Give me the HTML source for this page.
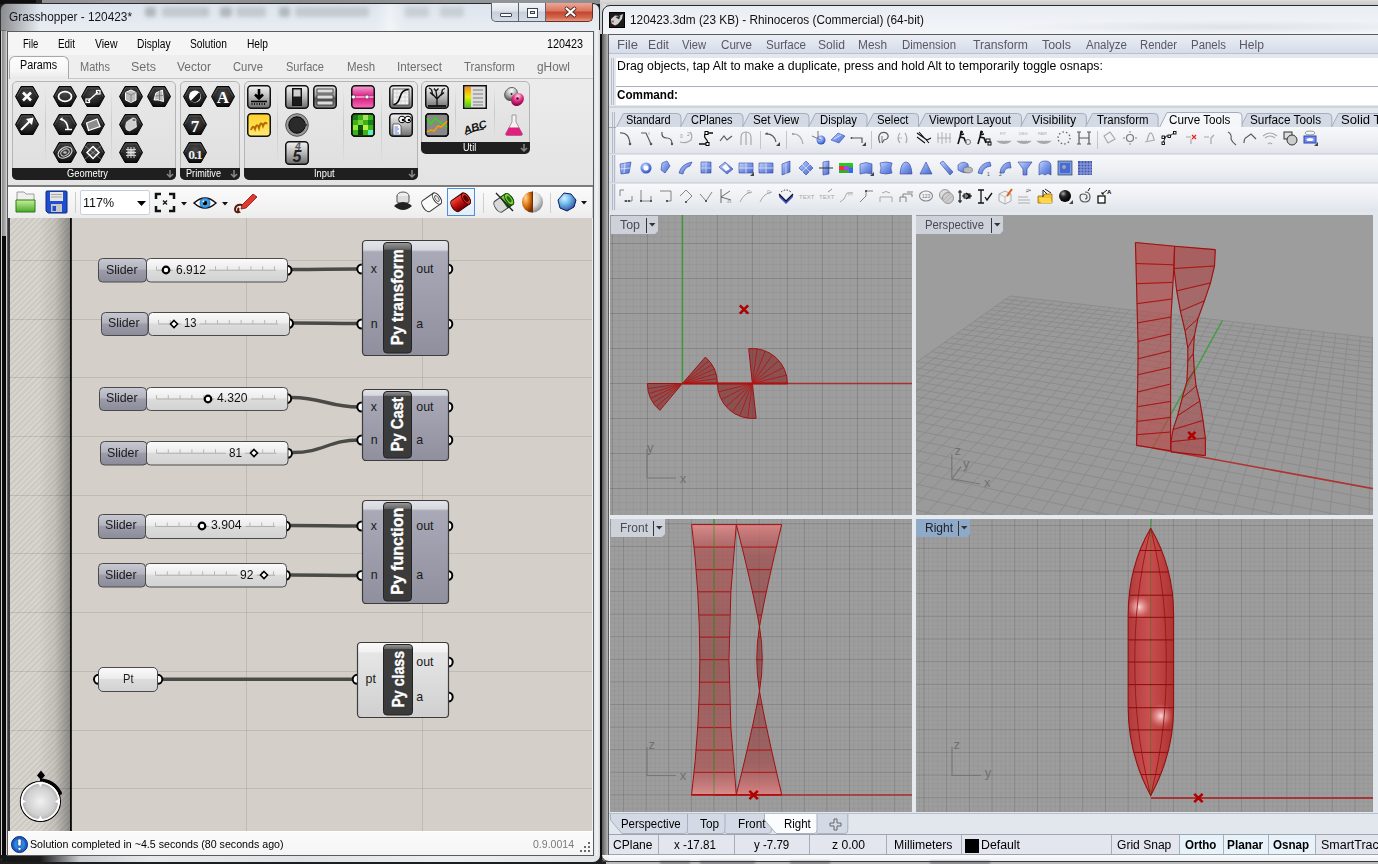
<!DOCTYPE html>
<html><head><meta charset="utf-8">
<style>
*{margin:0;padding:0;box-sizing:border-box}
html,body{width:1378px;height:864px;overflow:hidden;background:#1e1e1e;font-family:"Liberation Sans",sans-serif;font-size:12px;color:#000}
.a{position:absolute}
.t{white-space:nowrap;line-height:1}
svg.a{overflow:visible}
</style></head><body>
<div class="a" style="left:0px;top:0px;width:1378px;height:864px;background:#1e1e1e"></div>
<div class="a" style="left:0px;top:0px;width:600px;height:4px;background:linear-gradient(90deg,#0e0e0e 0 36px,#2a2a2a 36px 42px,#8e9194 42px,#9a9da0 120px,#8a8d90 300px,#95989b 450px,#8c8f92)"></div>
<div class="a" style="left:600px;top:0px;width:778px;height:6px;background:linear-gradient(#dcdcdc,#c4c4c4)"></div>
<div class="a" style="left:0px;top:3px;width:600px;height:859px;border-radius:7px 7px 7px 7px;background:linear-gradient(#dde4ec,#e9eef3 28px,#e4e8ec 40px,#dcdfe3);border:1px solid #2a2a2a"></div>
<div class="a" style="left:0px;top:30px;width:7px;height:832px;background:linear-gradient(90deg,#111 0 1px,#d0d0d0 1px 2px,#0a0a0a 2px 6px,#cfcfcf 6px);border-bottom-left-radius:7px"></div>
<div class="a" style="left:2px;top:30px;width:4px;height:206px;background:linear-gradient(90deg,#8a8a8a,#b8b8b8)"></div>
<div class="a" style="left:0px;top:4px;width:40px;height:27px;border-top-left-radius:7px;background:linear-gradient(90deg,rgba(60,60,60,.55),rgba(200,205,210,0))"></div>
<div class="a" style="left:0px;top:855px;width:600px;height:7px;border-radius:0 0 7px 7px;background:linear-gradient(90deg,#161616 0,#1a1a1a 40px,#c9cdd2 80px,#e6e9ec 150px,#dfe2e6 300px,#eceff2 450px,#e2e5e8);"></div>
<div class="a" style="left:594px;top:30px;width:6px;height:826px;background:linear-gradient(90deg,#dfe3e7,#f2f4f6 3px,#cfd3d8)"></div>
<div class="a" style="left:145px;top:7px;width:11px;height:10px;background:rgba(90,95,100,0.35);filter:blur(2px);border-radius:3px"></div>
<div class="a" style="left:162px;top:7px;width:42px;height:10px;background:rgba(90,95,100,0.22);filter:blur(2px);border-radius:3px"></div>
<div class="a" style="left:203px;top:7px;width:6px;height:10px;background:rgba(90,95,100,0.25);filter:blur(2px);border-radius:3px"></div>
<div class="a" style="left:220px;top:7px;width:12px;height:10px;background:rgba(90,95,100,0.35);filter:blur(2px);border-radius:3px"></div>
<div class="a" style="left:236px;top:7px;width:30px;height:10px;background:rgba(90,95,100,0.22);filter:blur(2px);border-radius:3px"></div>
<div class="a" style="left:279px;top:7px;width:11px;height:10px;background:rgba(90,95,100,0.35);filter:blur(2px);border-radius:3px"></div>
<div class="a" style="left:295px;top:7px;width:74px;height:10px;background:rgba(90,95,100,0.22);filter:blur(2px);border-radius:3px"></div>
<div class="a" style="left:405px;top:7px;width:24px;height:10px;background:rgba(90,95,100,0.18);filter:blur(2px);border-radius:3px"></div>
<div class="a" style="left:440px;top:7px;width:24px;height:10px;background:rgba(90,95,100,0.18);filter:blur(2px);border-radius:3px"></div>
<div class="a" style="left:375px;top:4px;width:30px;height:27px;background:linear-gradient(90deg,rgba(255,255,255,0),rgba(255,255,255,.45) 50%,rgba(255,255,255,0))"></div>
<div class="a t" style="left:8.5px;top:10.84px;font-size:12px;color:#14141e;transform:scaleX(0.9861);transform-origin:0 0;">Grasshopper - 120423*</div>
<div class="a" style="left:491px;top:3px;width:28px;height:19px;border:1px solid #5d6470;border-top:none;border-radius:0 0 0 5px;background:linear-gradient(#f2f4f7,#dfe3ea 45%,#c9cfd9 50%,#d6dce4)"></div>
<div class="a" style="left:519px;top:3px;width:27px;height:19px;border:1px solid #5d6470;border-top:none;border-left:none;background:linear-gradient(#f2f4f7,#dfe3ea 45%,#c9cfd9 50%,#d6dce4)"></div>
<div class="a" style="left:546px;top:3px;width:47px;height:19px;border:1px solid #6e2b22;border-top:none;border-left:none;border-radius:0 0 5px 0;background:linear-gradient(#f0a593,#d9745e 45%,#c3442c 50%,#d3664c 80%,#e49a83)"></div>
<div class="a" style="left:500px;top:13px;width:12px;height:4px;background:#fff;border:1px solid #3b4454;border-radius:1px"></div>
<div class="a" style="left:527px;top:8px;width:11px;height:10px;background:#fff;border:1px solid #3b4454"></div>
<div class="a" style="left:530px;top:11px;width:5px;height:3px;background:#dde;border:1px solid #3b4454"></div>
<svg class="a" style="left:564px;top:6px;" width="13" height="12" viewBox="0 0 13 12"><path d="M2.5 2.5 L10.5 9.5 M10.5 2.5 L2.5 9.5" stroke="#4a2a26" stroke-width="3.8" stroke-linecap="round"/><path d="M2.5 2.5 L10.5 9.5 M10.5 2.5 L2.5 9.5" stroke="#fff" stroke-width="2.2" stroke-linecap="round"/></svg>
<div class="a" style="left:7px;top:31px;width:587px;height:825px;background:#f0f0f0;border:1px solid #5b5b5b"></div>
<div class="a" style="left:8px;top:32px;width:585px;height:23px;background:#f5f5f5"></div>
<div class="a t" style="left:23.4px;top:37.84px;font-size:12px;color:#000;transform:scaleX(0.7913);transform-origin:0 0;">File</div>
<div class="a t" style="left:58px;top:37.84px;font-size:12px;color:#000;transform:scaleX(0.8221);transform-origin:0 0;">Edit</div>
<div class="a t" style="left:95px;top:37.84px;font-size:12px;color:#000;transform:scaleX(0.8723);transform-origin:0 0;">View</div>
<div class="a t" style="left:137px;top:37.84px;font-size:12px;color:#000;transform:scaleX(0.8514);transform-origin:0 0;">Display</div>
<div class="a t" style="left:190px;top:37.84px;font-size:12px;color:#000;transform:scaleX(0.8533);transform-origin:0 0;">Solution</div>
<div class="a t" style="left:247px;top:37.84px;font-size:12px;color:#000;transform:scaleX(0.8509);transform-origin:0 0;">Help</div>
<div class="a t" style="left:547px;top:37.84px;font-size:12px;color:#000;transform:scaleX(0.8991);transform-origin:0 0;">120423</div>
<div class="a" style="left:8px;top:55px;width:585px;height:25px;background:#eeeeee"></div>
<div class="a" style="left:9px;top:56px;width:60px;height:24px;background:linear-gradient(#fdfdfd,#f6f6f6 60%,#e6e6e6);border:1px solid #a8a8a8;border-bottom:none;border-radius:6px 6px 0 0"></div>
<div class="a t" style="left:19.5px;top:59.34px;font-size:12px;color:#000;transform:scaleX(0.8950);transform-origin:0 0;">Params</div>
<div class="a t" style="left:79.5px;top:61.14px;font-size:12px;color:#6e6e6e;transform:scaleX(0.9181);transform-origin:0 0;">Maths</div>
<div class="a t" style="left:131px;top:61.14px;font-size:12px;color:#6e6e6e;transform:scaleX(1.0412);transform-origin:0 0;">Sets</div>
<div class="a t" style="left:177px;top:61.14px;font-size:12px;color:#6e6e6e;transform:scaleX(0.9995);transform-origin:0 0;">Vector</div>
<div class="a t" style="left:233px;top:61.14px;font-size:12px;color:#6e6e6e;transform:scaleX(0.9373);transform-origin:0 0;">Curve</div>
<div class="a t" style="left:286px;top:61.14px;font-size:12px;color:#6e6e6e;transform:scaleX(0.9189);transform-origin:0 0;">Surface</div>
<div class="a t" style="left:347px;top:61.14px;font-size:12px;color:#6e6e6e;transform:scaleX(0.9543);transform-origin:0 0;">Mesh</div>
<div class="a t" style="left:397px;top:61.14px;font-size:12px;color:#6e6e6e;transform:scaleX(0.9779);transform-origin:0 0;">Intersect</div>
<div class="a t" style="left:464px;top:61.14px;font-size:12px;color:#6e6e6e;transform:scaleX(0.9405);transform-origin:0 0;">Transform</div>
<div class="a t" style="left:537px;top:61.14px;font-size:12px;color:#6e6e6e;transform:scaleX(0.9897);transform-origin:0 0;">gHowl</div>
<div class="a" style="left:8px;top:79px;width:585px;height:106px;background:linear-gradient(#ececec,#e3e3e3)"></div>
<div class="a" style="left:69px;top:78px;width:524px;height:1px;background:#c9c9c9"></div>
<div class="a" style="left:12px;top:81px;width:164px;height:99px;border:1px solid #b5b5b5;border-radius:5px;background:linear-gradient(#e9e9e9,#dedede)"></div>
<div class="a" style="left:12px;top:168px;width:164px;height:12px;background:#1f1f1f;border-radius:0 0 5px 5px"></div>
<div class="a t" style="left:67px;top:168.11px;font-size:10.5px;color:#fff;transform:scaleX(0.8895);transform-origin:0 0;">Geometry</div>
<svg class="a" style="left:166px;top:170px;" width="8" height="8" viewBox="0 0 8 8"><path d="M4 0V7M1 4L4 7L7 4" stroke="#888" stroke-width="1.5" fill="none"/></svg>
<div class="a" style="left:180px;top:81px;width:60px;height:99px;border:1px solid #b5b5b5;border-radius:5px;background:linear-gradient(#e9e9e9,#dedede)"></div>
<div class="a" style="left:180px;top:168px;width:60px;height:12px;background:#1f1f1f;border-radius:0 0 5px 5px"></div>
<div class="a t" style="left:186px;top:168.11px;font-size:10.5px;color:#fff;transform:scaleX(0.8695);transform-origin:0 0;">Primitive</div>
<svg class="a" style="left:230px;top:170px;" width="8" height="8" viewBox="0 0 8 8"><path d="M4 0V7M1 4L4 7L7 4" stroke="#888" stroke-width="1.5" fill="none"/></svg>
<div class="a" style="left:244px;top:81px;width:174px;height:99px;border:1px solid #b5b5b5;border-radius:5px;background:linear-gradient(#e9e9e9,#dedede)"></div>
<div class="a" style="left:244px;top:168px;width:174px;height:12px;background:#1f1f1f;border-radius:0 0 5px 5px"></div>
<div class="a t" style="left:314.4px;top:168.11px;font-size:10.5px;color:#fff;transform:scaleX(0.8822);transform-origin:0 0;">Input</div>
<svg class="a" style="left:408px;top:170px;" width="8" height="8" viewBox="0 0 8 8"><path d="M4 0V7M1 4L4 7L7 4" stroke="#888" stroke-width="1.5" fill="none"/></svg>
<div class="a" style="left:421px;top:81px;width:109px;height:73px;border:1px solid #b5b5b5;border-radius:5px;background:linear-gradient(#e9e9e9,#dedede)"></div>
<div class="a" style="left:421px;top:142px;width:109px;height:12px;background:#1f1f1f;border-radius:0 0 5px 5px"></div>
<div class="a t" style="left:463px;top:142.11px;font-size:10.5px;color:#fff;transform:scaleX(0.8704);transform-origin:0 0;">Util</div>
<svg class="a" style="left:520px;top:144px;" width="8" height="8" viewBox="0 0 8 8"><path d="M4 0V7M1 4L4 7L7 4" stroke="#888" stroke-width="1.5" fill="none"/></svg>
<div class="a" style="left:45px;top:86px;width:1px;height:78px;background:linear-gradient(rgba(0,0,0,0),rgba(0,0,0,.12),rgba(0,0,0,0))"></div>
<div class="a" style="left:111px;top:86px;width:1px;height:78px;background:linear-gradient(rgba(0,0,0,0),rgba(0,0,0,.12),rgba(0,0,0,0))"></div>
<div class="a" style="left:277px;top:86px;width:1px;height:78px;background:linear-gradient(rgba(0,0,0,0),rgba(0,0,0,.12),rgba(0,0,0,0))"></div>
<div class="a" style="left:343px;top:86px;width:1px;height:78px;background:linear-gradient(rgba(0,0,0,0),rgba(0,0,0,.12),rgba(0,0,0,0))"></div>
<div class="a" style="left:381px;top:86px;width:1px;height:78px;background:linear-gradient(rgba(0,0,0,0),rgba(0,0,0,.12),rgba(0,0,0,0))"></div>
<div class="a" style="left:455px;top:86px;width:1px;height:52px;background:linear-gradient(rgba(0,0,0,0),rgba(0,0,0,.12),rgba(0,0,0,0))"></div>
<div class="a" style="left:494px;top:86px;width:1px;height:52px;background:linear-gradient(rgba(0,0,0,0),rgba(0,0,0,.12),rgba(0,0,0,0))"></div>
<div class="a" style="left:8px;top:185px;width:585px;height:2px;background:#7d7d7d"></div>
<div class="a" style="left:8px;top:187px;width:584px;height:31px;background:linear-gradient(#fbfbfb,#f3f3f3 60%,#ececec)"></div>
<div class="a" style="left:592px;top:187px;width:1px;height:31px;background:#cfcfcf"></div>
<div class="a" style="left:8px;top:218px;width:2px;height:613px;background:#3a3a3a"></div>
<div class="a" style="left:10px;top:218px;width:60px;height:613px;background:linear-gradient(90deg,rgba(0,0,0,0) 48%,rgba(0,0,0,.09) 75%,rgba(0,0,0,.34)),repeating-linear-gradient(-45deg,#d8d5ce 0 2px,#cdcac3 2px 4px)"></div>
<div class="a" style="left:70px;top:218px;width:2px;height:613px;background:linear-gradient(90deg,#080808 60%,#5a5955)"></div>
<div class="a" style="left:72px;top:218px;width:520px;height:613px;background:#d4d0c9"></div>
<div class="a" style="left:10px;top:260px;width:582px;height:1px;background:rgba(0,0,0,.10)"></div>
<div class="a" style="left:10px;top:319px;width:582px;height:1px;background:rgba(0,0,0,.10)"></div>
<div class="a" style="left:10px;top:377px;width:582px;height:1px;background:rgba(0,0,0,.10)"></div>
<div class="a" style="left:10px;top:436px;width:582px;height:1px;background:rgba(0,0,0,.10)"></div>
<div class="a" style="left:10px;top:495px;width:582px;height:1px;background:rgba(0,0,0,.10)"></div>
<div class="a" style="left:10px;top:553px;width:582px;height:1px;background:rgba(0,0,0,.10)"></div>
<div class="a" style="left:10px;top:612px;width:582px;height:1px;background:rgba(0,0,0,.10)"></div>
<div class="a" style="left:10px;top:671px;width:582px;height:1px;background:rgba(0,0,0,.10)"></div>
<div class="a" style="left:10px;top:730px;width:582px;height:1px;background:rgba(0,0,0,.10)"></div>
<div class="a" style="left:10px;top:788px;width:582px;height:1px;background:rgba(0,0,0,.10)"></div>
<div class="a" style="left:246px;top:218px;width:1px;height:613px;background:rgba(0,0,0,.10)"></div>
<div class="a" style="left:422px;top:218px;width:1px;height:613px;background:rgba(0,0,0,.10)"></div>
<div class="a" style="left:8px;top:831px;width:585px;height:24px;background:linear-gradient(#fbfbfb,#f4f4f4);border-top:1px solid #fff"></div>
<div class="a t" style="left:30px;top:839.19px;font-size:11px;color:#000;transform:scaleX(0.9675);transform-origin:0 0;">Solution completed in ~4.5 seconds (80 seconds ago)</div>
<div class="a t" style="left:533px;top:839.19px;font-size:11px;color:#7a7a7a;transform:scaleX(0.9576);transform-origin:0 0;">0.9.0014</div>
<div class="a" style="left:588px;top:842px;width:2px;height:2px;background:#6a6a6a"></div>
<div class="a" style="left:584px;top:846px;width:2px;height:2px;background:#6a6a6a"></div>
<div class="a" style="left:588px;top:846px;width:2px;height:2px;background:#6a6a6a"></div>
<div class="a" style="left:580px;top:850px;width:2px;height:2px;background:#6a6a6a"></div>
<div class="a" style="left:584px;top:850px;width:2px;height:2px;background:#6a6a6a"></div>
<div class="a" style="left:588px;top:850px;width:2px;height:2px;background:#6a6a6a"></div>
<svg width="0" height="0" style="position:absolute"><defs>
<radialGradient id="hexg" cx="50%" cy="35%" r="65%"><stop offset="0" stop-color="#4a4a4a"/><stop offset=".7" stop-color="#202020"/><stop offset="1" stop-color="#0a0a0a"/></radialGradient>
<linearGradient id="sqg" x1="0" y1="0" x2="0" y2="1"><stop offset="0" stop-color="#f4f4f4"/><stop offset=".5" stop-color="#b9b9b9"/><stop offset="1" stop-color="#6a6a6a"/></linearGradient>
<linearGradient id="sqd" x1="0" y1="0" x2="0" y2="1"><stop offset="0" stop-color="#e6e6e6"/><stop offset=".45" stop-color="#9a9a9a"/><stop offset=".55" stop-color="#5a5a5a"/><stop offset="1" stop-color="#8a8a8a"/></linearGradient>
<linearGradient id="pink" x1="0" y1="0" x2="0" y2="1"><stop offset="0" stop-color="#f3a6d3"/><stop offset=".5" stop-color="#d6187f"/><stop offset="1" stop-color="#f76fb9"/></linearGradient>
<linearGradient id="yel" x1="0" y1="0" x2="0" y2="1"><stop offset="0" stop-color="#ffd028"/><stop offset="1" stop-color="#ffe873"/></linearGradient>
<linearGradient id="leg" x1="0" y1="0" x2="0" y2="1"><stop offset="0" stop-color="#ff8a00"/><stop offset=".5" stop-color="#e8f000"/><stop offset="1" stop-color="#39d200"/></linearGradient>
<radialGradient id="ball" cx="35%" cy="30%" r="70%"><stop offset="0" stop-color="#fff"/><stop offset=".5" stop-color="#bbb"/><stop offset="1" stop-color="#555"/></radialGradient>
<radialGradient id="pball" cx="35%" cy="30%" r="70%"><stop offset="0" stop-color="#fde"/><stop offset=".5" stop-color="#e0388a"/><stop offset="1" stop-color="#8a0040"/></radialGradient>
<linearGradient id="folder" x1="0" y1="0" x2="0" y2="1"><stop offset="0" stop-color="#c9f09a"/><stop offset="1" stop-color="#4aa82a"/></linearGradient>
<radialGradient id="blueb" cx="35%" cy="30%" r="75%"><stop offset="0" stop-color="#d8f0ff"/><stop offset=".4" stop-color="#76c0f0"/><stop offset="1" stop-color="#2a4a9a"/></radialGradient>
<radialGradient id="redc" cx="40%" cy="35%" r="70%"><stop offset="0" stop-color="#f05050"/><stop offset=".6" stop-color="#c01010"/><stop offset="1" stop-color="#600"/></radialGradient>
</defs></svg>
<svg class="a" style="left:15px;top:86px;" width="24" height="21" viewBox="0 0 24 21"><path d="M0.5 10.5 L6 0.5 L18 0.5 L23.5 10.5 L18 20.5 L6 20.5 Z" fill="url(#hexg)" stroke="#050505"/><path d="M2 10.5 L6.8 2 L17.2 2 L22 10.5" fill="none" stroke="rgba(255,255,255,.18)"/><path d="M8 6.5 L16 14.5 M16 6.5 L8 14.5" stroke="#fff" stroke-width="2.6"/></svg>
<svg class="a" style="left:53px;top:86px;" width="24" height="21" viewBox="0 0 24 21"><path d="M0.5 10.5 L6 0.5 L18 0.5 L23.5 10.5 L18 20.5 L6 20.5 Z" fill="url(#hexg)" stroke="#050505"/><path d="M2 10.5 L6.8 2 L17.2 2 L22 10.5" fill="none" stroke="rgba(255,255,255,.18)"/><ellipse cx="12" cy="10.5" rx="6.5" ry="4.8" fill="none" stroke="#fff" stroke-width="1.8"/></svg>
<svg class="a" style="left:81px;top:86px;" width="24" height="21" viewBox="0 0 24 21"><path d="M0.5 10.5 L6 0.5 L18 0.5 L23.5 10.5 L18 20.5 L6 20.5 Z" fill="url(#hexg)" stroke="#050505"/><path d="M2 10.5 L6.8 2 L17.2 2 L22 10.5" fill="none" stroke="rgba(255,255,255,.18)"/><path d="M7 15 L17 6" stroke="#fff" stroke-width="1.3"/><rect x="5" y="13" width="3.5" height="3.5" fill="none" stroke="#fff" stroke-width="1.2"/><rect x="15.5" y="4.5" width="3.5" height="3.5" fill="none" stroke="#fff" stroke-width="1.2"/></svg>
<svg class="a" style="left:119px;top:86px;" width="24" height="21" viewBox="0 0 24 21"><path d="M0.5 10.5 L6 0.5 L18 0.5 L23.5 10.5 L18 20.5 L6 20.5 Z" fill="url(#hexg)" stroke="#050505"/><path d="M2 10.5 L6.8 2 L17.2 2 L22 10.5" fill="none" stroke="rgba(255,255,255,.18)"/><path d="M6.5 6.5 L12 4 L17 6.5 L17 14 L12 16.5 L6.5 14 Z" fill="#bdbdbd" stroke="#fff" stroke-width="1"/><path d="M12 9 L17 6.5 M12 9 L12 16.5 M12 9 L6.5 6.5" stroke="#777" stroke-width=".8"/></svg>
<svg class="a" style="left:147px;top:86px;" width="24" height="21" viewBox="0 0 24 21"><path d="M0.5 10.5 L6 0.5 L18 0.5 L23.5 10.5 L18 20.5 L6 20.5 Z" fill="url(#hexg)" stroke="#050505"/><path d="M2 10.5 L6.8 2 L17.2 2 L22 10.5" fill="none" stroke="rgba(255,255,255,.18)"/><path d="M7 14 L9 7 L15.5 4 L16.5 15.5 L11 14 Z" fill="#bbb" stroke="#fff"/><path d="M12.5 5 L12.5 14.5 M8.5 10 L16 9.5" stroke="#666" stroke-width=".7"/></svg>
<svg class="a" style="left:15px;top:114px;" width="24" height="21" viewBox="0 0 24 21"><path d="M0.5 10.5 L6 0.5 L18 0.5 L23.5 10.5 L18 20.5 L6 20.5 Z" fill="url(#hexg)" stroke="#050505"/><path d="M2 10.5 L6.8 2 L17.2 2 L22 10.5" fill="none" stroke="rgba(255,255,255,.18)"/><path d="M6 16 L15 7" stroke="#fff" stroke-width="2.2"/><path d="M11 5 L18.5 3.5 L17 11 Z" fill="#fff"/></svg>
<svg class="a" style="left:53px;top:114px;" width="24" height="21" viewBox="0 0 24 21"><path d="M0.5 10.5 L6 0.5 L18 0.5 L23.5 10.5 L18 20.5 L6 20.5 Z" fill="url(#hexg)" stroke="#050505"/><path d="M2 10.5 L6.8 2 L17.2 2 L22 10.5" fill="none" stroke="rgba(255,255,255,.18)"/><path d="M7.5 5 Q14.5 6.5 15 15 M12 15.5 L19 15.5" fill="none" stroke="#fff" stroke-width="1.6"/><path d="M6.5 5.5 L9.5 3 L9.8 7Z" fill="#fff"/></svg>
<svg class="a" style="left:81px;top:114px;" width="24" height="21" viewBox="0 0 24 21"><path d="M0.5 10.5 L6 0.5 L18 0.5 L23.5 10.5 L18 20.5 L6 20.5 Z" fill="url(#hexg)" stroke="#050505"/><path d="M2 10.5 L6.8 2 L17.2 2 L22 10.5" fill="none" stroke="rgba(255,255,255,.18)"/><path d="M5.5 9 L16 5 L19 12.5 L7.5 16.5 Z" fill="#8d8d8d" stroke="#fff" stroke-width="1.3"/></svg>
<svg class="a" style="left:119px;top:114px;" width="24" height="21" viewBox="0 0 24 21"><path d="M0.5 10.5 L6 0.5 L18 0.5 L23.5 10.5 L18 20.5 L6 20.5 Z" fill="url(#hexg)" stroke="#050505"/><path d="M2 10.5 L6.8 2 L17.2 2 L22 10.5" fill="none" stroke="rgba(255,255,255,.18)"/><path d="M7.5 8 L14 3.8 Q17.5 4.5 17 8 L17.5 13 L10.5 17 Q6.5 16.5 6.5 12.5 Z" fill="#cfcfcf" stroke="#fff" stroke-width=".6"/><ellipse cx="15" cy="6" rx="2.2" ry="1.8" fill="#777" stroke="#fff" stroke-width=".6"/></svg>
<svg class="a" style="left:53px;top:142px;" width="24" height="21" viewBox="0 0 24 21"><path d="M0.5 10.5 L6 0.5 L18 0.5 L23.5 10.5 L18 20.5 L6 20.5 Z" fill="url(#hexg)" stroke="#050505"/><path d="M2 10.5 L6.8 2 L17.2 2 L22 10.5" fill="none" stroke="rgba(255,255,255,.18)"/><ellipse cx="12" cy="10.5" rx="7.5" ry="5" transform="rotate(-30 12 10.5)" fill="none" stroke="#ddd" stroke-width="1.1"/><ellipse cx="12" cy="10.5" rx="4.5" ry="3" transform="rotate(-30 12 10.5)" fill="none" stroke="#ccc" stroke-width="1"/><ellipse cx="12" cy="10.5" rx="1.8" ry="1.2" fill="#bbb"/></svg>
<svg class="a" style="left:81px;top:142px;" width="24" height="21" viewBox="0 0 24 21"><path d="M0.5 10.5 L6 0.5 L18 0.5 L23.5 10.5 L18 20.5 L6 20.5 Z" fill="url(#hexg)" stroke="#050505"/><path d="M2 10.5 L6.8 2 L17.2 2 L22 10.5" fill="none" stroke="rgba(255,255,255,.18)"/><path d="M12 4.5 L18 10.5 L12 16.5 L6 10.5 Z" fill="#444" stroke="#fff" stroke-width="1.5"/><path d="M4 4 L20 17 M20 4 L4 17" stroke="rgba(255,255,255,.35)" stroke-width="1"/></svg>
<svg class="a" style="left:119px;top:142px;" width="24" height="21" viewBox="0 0 24 21"><path d="M0.5 10.5 L6 0.5 L18 0.5 L23.5 10.5 L18 20.5 L6 20.5 Z" fill="url(#hexg)" stroke="#050505"/><path d="M2 10.5 L6.8 2 L17.2 2 L22 10.5" fill="none" stroke="rgba(255,255,255,.18)"/><g stroke="#cfcfcf" stroke-width="1"><path d="M7 7.5H17M7 10.5H17M7 13.5H17M9 5V16M12 5V16M15 5V16"/></g><circle cx="12" cy="10.5" r="3" fill="rgba(255,255,255,.5)"/></svg>
<svg class="a" style="left:183px;top:86px;" width="24" height="21" viewBox="0 0 24 21"><path d="M0.5 10.5 L6 0.5 L18 0.5 L23.5 10.5 L18 20.5 L6 20.5 Z" fill="url(#hexg)" stroke="#050505"/><path d="M2 10.5 L6.8 2 L17.2 2 L22 10.5" fill="none" stroke="rgba(255,255,255,.18)"/><circle cx="12" cy="10.5" r="6" fill="#fff"/><path d="M16.2 6.3 L7.8 14.7 A6 6 0 0 0 16.2 6.3Z" fill="#1a1a1a"/></svg>
<svg class="a" style="left:211px;top:86px;" width="24" height="21" viewBox="0 0 24 21"><path d="M0.5 10.5 L6 0.5 L18 0.5 L23.5 10.5 L18 20.5 L6 20.5 Z" fill="url(#hexg)" stroke="#050505"/><path d="M2 10.5 L6.8 2 L17.2 2 L22 10.5" fill="none" stroke="rgba(255,255,255,.18)"/><text x="12" y="17" text-anchor="middle" font-family="Liberation Serif" font-weight="bold" font-size="17" fill="#fff">A</text></svg>
<svg class="a" style="left:183px;top:114px;" width="24" height="21" viewBox="0 0 24 21"><path d="M0.5 10.5 L6 0.5 L18 0.5 L23.5 10.5 L18 20.5 L6 20.5 Z" fill="url(#hexg)" stroke="#050505"/><path d="M2 10.5 L6.8 2 L17.2 2 L22 10.5" fill="none" stroke="rgba(255,255,255,.18)"/><text x="12" y="17.5" text-anchor="middle" font-family="Liberation Serif" font-weight="bold" font-size="17" fill="#fff">7</text></svg>
<svg class="a" style="left:183px;top:142px;" width="24" height="21" viewBox="0 0 24 21"><path d="M0.5 10.5 L6 0.5 L18 0.5 L23.5 10.5 L18 20.5 L6 20.5 Z" fill="url(#hexg)" stroke="#050505"/><path d="M2 10.5 L6.8 2 L17.2 2 L22 10.5" fill="none" stroke="rgba(255,255,255,.18)"/><text x="12" y="16.5" text-anchor="middle" font-family="Liberation Serif" font-weight="bold" font-size="13.5" letter-spacing="-1.2" fill="#eee">0.1</text></svg>
<svg class="a" style="left:247px;top:85px;" width="24" height="24" viewBox="0 0 24 24"><rect x="0.75" y="0.75" width="22.5" height="22.5" rx="3.5" fill="url(#sqg)" stroke="#111" stroke-width="1.5"/><path d="M12 4 V13 M8 9.5 L12 13.5 L16 9.5" stroke="#000" stroke-width="2.6" fill="none"/><path d="M4 16.5 H20" stroke="#000" stroke-width="1.6"/><path d="M5 18 V20 M7.5 18V20 M10 18V20 M12.5 18V20 M15 18V20 M17.5 18V20" stroke="#000" stroke-width=".9"/></svg>
<svg class="a" style="left:247px;top:113px;" width="24" height="24" viewBox="0 0 24 24"><rect x="0.75" y="0.75" width="22.5" height="22.5" rx="3.5" fill="url(#yel)" stroke="#111" stroke-width="1.5"/><path d="M4 17 Q6 11 8 16 Q10 9 12 15 Q14 7 16 13 Q18 8 20 11" stroke="#b56a00" stroke-width="2" fill="none"/></svg>
<svg class="a" style="left:285px;top:85px;" width="24" height="24" viewBox="0 0 24 24"><rect x="0.75" y="0.75" width="22.5" height="22.5" rx="3.5" fill="url(#sqg)" stroke="#111" stroke-width="1.5"/><rect x="7.5" y="3.5" width="9" height="17" fill="#1b1b1b" stroke="#111"/><rect x="8.5" y="4.5" width="7" height="7" fill="#cfcfcf"/></svg>
<svg class="a" style="left:313px;top:85px;" width="24" height="24" viewBox="0 0 24 24"><rect x="0.75" y="0.75" width="22.5" height="22.5" rx="3.5" fill="url(#sqd)" stroke="#111" stroke-width="1.5"/><rect x="4" y="4" width="16" height="4" fill="#ddd" stroke="#333" stroke-width=".8"/><rect x="4" y="10" width="16" height="4" fill="#ddd" stroke="#333" stroke-width=".8"/><rect x="4" y="16" width="16" height="4" fill="#ddd" stroke="#333" stroke-width=".8"/></svg>
<svg class="a" style="left:285px;top:113px;" width="24" height="24" viewBox="0 0 24 24"><circle cx="12" cy="12" r="11.3" fill="#9a9a9a" stroke="#555" stroke-width="1"/><circle cx="12" cy="12" r="8.2" fill="#2a2a2a" stroke="#000" stroke-width="1"/><path d="M17 8 L22.5 12 L17 16Z" fill="#2a2a2a"/></svg>
<svg class="a" style="left:285px;top:141px;" width="24" height="24" viewBox="0 0 24 24"><rect x="0.75" y="0.75" width="22.5" height="22.5" rx="3.5" fill="url(#sqg)" stroke="#111" stroke-width="1.5"/><text x="12" y="21" text-anchor="middle" font-family="Liberation Sans" font-weight="bold" font-style="italic" font-size="16" fill="#222">5</text><text x="13" y="9" text-anchor="middle" font-family="Liberation Sans" font-weight="bold" font-style="italic" font-size="10" fill="#555">4</text></svg>
<svg class="a" style="left:351px;top:85px;" width="24" height="24" viewBox="0 0 24 24"><rect x="0.75" y="0.75" width="22.5" height="22.5" rx="3.5" fill="url(#pink)" stroke="#111" stroke-width="1.5"/><path d="M1.5 12 H22.5" stroke="#fff" stroke-width="1"/><circle cx="2.5" cy="12" r="2" fill="#fff" stroke="#333" stroke-width=".6"/><circle cx="16" cy="12" r="2" fill="#fff" stroke="#333" stroke-width=".6"/></svg>
<svg class="a" style="left:351px;top:113px;" width="24" height="24" viewBox="0 0 24 24"><rect x="0.75" y="0.75" width="22.5" height="22.5" rx="3.5" fill="#3bb21a" stroke="#111" stroke-width="1.5"/><g><rect x="2" y="2" width="20" height="20" fill="#3bb21a"/><rect x="2" y="2" width="5" height="5" fill="#1e7a12"/><rect x="12" y="2" width="5" height="5" fill="#a8e060"/><rect x="7" y="7" width="5" height="5" fill="#7cd23a"/><rect x="17" y="7" width="5" height="5" fill="#148214"/><rect x="2" y="12" width="5" height="5" fill="#8fe83a"/><rect x="7" y="12" width="5" height="5" fill="#0b5a0b"/><rect x="12" y="12" width="5" height="5" fill="#b9f050"/><rect x="17" y="17" width="5" height="5" fill="#5ff0c0"/><rect x="7" y="17" width="5" height="5" fill="#0a3a0a"/></g><rect x="0.75" y="0.75" width="22.5" height="22.5" rx="3.5" fill="none" stroke="#111" stroke-width="1.5"/></svg>
<svg class="a" style="left:389px;top:85px;" width="24" height="24" viewBox="0 0 24 24"><rect x="0.75" y="0.75" width="22.5" height="22.5" rx="3.5" fill="url(#sqg)" stroke="#111" stroke-width="1.5"/><rect x="4" y="4" width="16" height="16" fill="#f2f2f2" stroke="#333" stroke-width=".8"/><path d="M8 4V20M12 4V20M16 4V20M4 8H20M4 12H20M4 16H20" stroke="#bbb" stroke-width=".5"/><path d="M4.5 19.5 Q9 19.5 11 12 Q13 4.5 19.5 4.5" stroke="#000" stroke-width="1.6" fill="none"/></svg>
<svg class="a" style="left:389px;top:113px;" width="24" height="24" viewBox="0 0 24 24"><rect x="0.75" y="0.75" width="22.5" height="22.5" rx="3.5" fill="url(#sqg)" stroke="#111" stroke-width="1.5"/><circle cx="13" cy="6.5" r="3.3" fill="#fff" stroke="#000" stroke-width="1"/><circle cx="19" cy="6.5" r="3.3" fill="#fff" stroke="#000" stroke-width="1"/><circle cx="14" cy="7" r="1.3" fill="#000"/><circle cx="20" cy="7" r="1.3" fill="#000"/><path d="M4 11 H10 L12 13 V22 H4 Z" fill="#fff" stroke="#333" stroke-width=".7"/><path d="M5.5 14H9M5.5 16H10M5.5 18H8.5M5.5 20H10" stroke="#4466dd" stroke-width=".9"/></svg>
<svg class="a" style="left:425px;top:85px;" width="24" height="24" viewBox="0 0 24 24"><rect x="0.75" y="0.75" width="22.5" height="22.5" rx="3.5" fill="url(#sqg)" stroke="#111" stroke-width="1.5"/><path d="M12 21 V13 M12 14 L7.5 9 M12 14 L16.5 9 M8.5 10.5 L5 7.5 M15.5 10.5 L19 7.5 M7.5 9 L6.5 4.5 M16.5 9 L17.5 4.5 M12 13 L11 6 M11 6 L9 3.5 M11 6 L13.5 3.5 M6.5 4.5 L4 3 M17.5 4.5 L20 3.5" stroke="#111" stroke-width="1.3" fill="none"/><path d="M3 21H21" stroke="#111" stroke-width="1.8"/></svg>
<svg class="a" style="left:425px;top:113px;" width="24" height="24" viewBox="0 0 24 24"><rect x="0.75" y="0.75" width="22.5" height="22.5" rx="3.5" fill="#999" stroke="#111" stroke-width="1.5"/><rect x="2" y="2" width="20" height="20" fill="#888"/><path d="M1.5 5 L6 11 L10 5 L16 10 L22.5 14" stroke="#3fd21a" stroke-width="1.6" fill="none"/><path d="M1.5 19 L6 17 L9 18 L13 13 L16 14 L22.5 8" stroke="#ff9a00" stroke-width="1.6" fill="none"/><rect x="0.75" y="0.75" width="22.5" height="22.5" rx="3.5" fill="none" stroke="#111" stroke-width="1.5"/></svg>
<svg class="a" style="left:463px;top:85px;" width="24" height="24" viewBox="0 0 24 24"><rect x="0.75" y="0.75" width="22.5" height="22.5" fill="#ddd" stroke="#111" stroke-width="1.5"/><rect x="2" y="2" width="6" height="20" fill="url(#leg)"/><path d="M10 5H20M10 9H20M10 13H20M10 17H20M10 20H20" stroke="#666" stroke-width=".8"/></svg>
<svg class="a" style="left:463px;top:113px;" width="24" height="24" viewBox="0 0 24 24"><text x="12" y="18" text-anchor="middle" font-family="Liberation Sans" font-weight="bold" font-style="italic" font-size="11" fill="#111" transform="rotate(-18 12 14)">ABC</text><path d="M3 22 Q10 17 21 16" stroke="#111" stroke-width="1" fill="none"/></svg>
<svg class="a" style="left:502px;top:85px;" width="24" height="24" viewBox="0 0 24 24"><ellipse cx="9" cy="9" rx="6" ry="7" transform="rotate(40 9 9)" fill="url(#ball)" stroke="#444" stroke-width=".7"/><ellipse cx="15.5" cy="14.5" rx="6" ry="7" transform="rotate(40 15.5 14.5)" fill="url(#pball)"/><circle cx="9.5" cy="9" r="1" fill="#222"/><circle cx="15.5" cy="13.5" r="1.2" fill="#600"/></svg>
<svg class="a" style="left:502px;top:113px;" width="24" height="24" viewBox="0 0 24 24"><path d="M10 2 H14 V9 L20.5 21 Q20.5 22.5 18.5 22.5 H5.5 Q3.5 22.5 3.5 21 L10 9 Z" fill="#f4f4f4" stroke="#888" stroke-width=".8"/><path d="M7 14.5 H17 L20.5 21 Q20.5 22.5 18.5 22.5 H5.5 Q3.5 22.5 3.5 21 Z" fill="#e0207f"/></svg>
<svg class="a" style="left:15px;top:190px;" width="22" height="24" viewBox="0 0 22 24"><path d="M2 2 H9 L11 4 H19 V21 H2Z" fill="#f0f0f0" stroke="#888" stroke-width=".8"/><path d="M1 10 H20 V22 H1 Z" fill="url(#folder)" stroke="#2a7a10" stroke-width="1"/></svg>
<svg class="a" style="left:45px;top:190px;" width="23" height="24" viewBox="0 0 23 24"><path d="M1 2 Q1 1 2 1 H21 Q22 1 22 2 V22 Q22 23 21 23 H3 L1 21 Z" fill="#1f4fd0" stroke="#0a2a80" stroke-width="1"/><rect x="5" y="2" width="13" height="9" fill="#e6e6e6"/><path d="M6 4.5H17M6 7H17" stroke="#999" stroke-width=".8"/><rect x="6" y="14" width="11" height="8" fill="#c8c8c8"/><rect x="7.5" y="16" width="3.5" height="5" fill="#1f4fd0"/></svg>
<div class="a" style="left:75px;top:192px;width:1px;height:21px;background:#cdcdcd"></div>
<div class="a" style="left:80px;top:190px;width:70px;height:25px;background:#fff;border:1px solid #c6d1dd;border-radius:2px"></div>
<div class="a t" style="left:83px;top:196.00px;font-size:13px;color:#111;transform:scaleX(0.9603);transform-origin:0 0;">117%</div>
<svg class="a" style="left:137px;top:201px;" width="9" height="5" viewBox="0 0 9 5"><path d="M0 0H9L4.5 5Z" fill="#000"/></svg>
<svg class="a" style="left:154px;top:192px;" width="22" height="21" viewBox="0 0 22 21"><path d="M2 7V2H7 M15 2H20V7 M20 14V19H15 M7 19H2V14" stroke="#111" stroke-width="2.5" fill="none"/><path d="M9 8.5L13 12.5M13 8.5L9 12.5" stroke="#111" stroke-width="1.3"/></svg>
<svg class="a" style="left:181px;top:202px;" width="6" height="4" viewBox="0 0 6 4"><path d="M0 0H6L3 3.5Z" fill="#111"/></svg>
<svg class="a" style="left:193px;top:196px;" width="24" height="14" viewBox="0 0 24 14"><path d="M1 7 Q12 -3 23 7 Q12 17 1 7Z" fill="#fff" stroke="#111" stroke-width="1.5"/><circle cx="12" cy="7" r="5" fill="#3ea0e8" stroke="#1a5fa0" stroke-width=".8"/><circle cx="12" cy="7" r="2.2" fill="#000"/><circle cx="10.5" cy="5.5" r="1" fill="#fff"/></svg>
<svg class="a" style="left:222px;top:202px;" width="6" height="4" viewBox="0 0 6 4"><path d="M0 0H6L3 3.5Z" fill="#111"/></svg>
<svg class="a" style="left:233px;top:192px;" width="25" height="22" viewBox="0 0 25 22"><path d="M9 13 L20 2 L24 5 L13 16 L8 17Z" fill="#e23a2a" stroke="#7a1010" stroke-width=".8"/><path d="M9 13 Q3 12 2 17 Q2 21 6 20 Q4 18 6 16" stroke="#5a1a0a" stroke-width="2" fill="none"/></svg>
<svg class="a" style="left:393px;top:190px;" width="20" height="24" viewBox="0 0 20 24"><ellipse cx="10" cy="6" rx="6" ry="4" fill="#eee" stroke="#555"/><path d="M4 6 V12 Q10 16 16 12 V6" fill="#ddd" stroke="#555"/><path d="M1 16 Q10 8 19 16 Q10 24 1 16Z" fill="#222"/></svg>
<svg class="a" style="left:420px;top:190px;" width="24" height="24" viewBox="0 0 24 24"><g transform="translate(12 12) rotate(-35)"><path d="M-7 -6.5 H6 A3.2 6.5 0 0 1 6 6.5 H-7 A3.2 6.5 0 0 1 -7 -6.5Z" fill="#fafafa" stroke="#333" stroke-width="1"/><ellipse cx="6" cy="0" rx="3.2" ry="6.5" fill="#fff" stroke="#333" stroke-width="1"/><ellipse cx="6" cy="0" rx="1.6" ry="3.5" fill="#e8e8e8" stroke="#333" stroke-width=".7"/></g></svg>
<div class="a" style="left:447px;top:188px;width:28px;height:28px;background:linear-gradient(#f4f8fc,#e3eef9);border:1px solid #4e90d8"></div>
<svg width="0" height="0" style="position:absolute"><defs><linearGradient id="redt" x1="0" y1="0" x2="0" y2="1"><stop offset="0" stop-color="#f04a3a"/><stop offset=".5" stop-color="#c81010"/><stop offset="1" stop-color="#6a0000"/></linearGradient><linearGradient id="grt" x1="0" y1="0" x2="0" y2="1"><stop offset="0" stop-color="#9ae060"/><stop offset=".5" stop-color="#3a9a1a"/><stop offset="1" stop-color="#1a5a0a"/></linearGradient><radialGradient id="orb" cx="35%" cy="30%" r="75%"><stop offset="0" stop-color="#ffd9a0"/><stop offset=".5" stop-color="#e07a10"/><stop offset="1" stop-color="#7a3000"/></radialGradient><radialGradient id="wsph" cx="35%" cy="30%" r="75%"><stop offset="0" stop-color="#fff"/><stop offset=".6" stop-color="#ddd"/><stop offset="1" stop-color="#888"/></radialGradient></defs></svg>
<svg class="a" style="left:449px;top:190px;" width="24" height="24" viewBox="0 0 24 24"><g transform="translate(12 12) rotate(-35)"><path d="M-7 -6.5 H6 A3.2 6.5 0 0 1 6 6.5 H-7 A3.2 6.5 0 0 1 -7 -6.5Z" fill="url(#redt)" stroke="#3a0000" stroke-width="1"/><ellipse cx="6" cy="0" rx="3.2" ry="6.5" fill="#e03020" stroke="#3a0000" stroke-width="1"/><ellipse cx="6" cy="0" rx="1.6" ry="3.5" fill="#600" stroke="#3a0000" stroke-width=".7"/></g></svg>
<div class="a" style="left:483px;top:193px;width:1px;height:20px;background:#cfcfcf"></div>
<svg class="a" style="left:493px;top:190px;" width="24" height="24" viewBox="0 0 24 24"><g transform="translate(12 12) rotate(-35)"><path d="M-8 -6.5 H5 A3.2 6.5 0 0 1 5 6.5 H-8 A3.2 6.5 0 0 1 -8 -6.5Z" fill="#d8d8d8" stroke="#444" stroke-width="1"/><path d="M-1 -6.5 H5 A3.2 6.5 0 0 1 5 6.5 H-1Z" fill="url(#grt)" stroke="#1a4a0a" stroke-width="1"/><ellipse cx="5" cy="0" rx="3.2" ry="6.5" fill="#7ad040" stroke="#1a4a0a"/><ellipse cx="5" cy="0" rx="1.6" ry="3.5" fill="#2a6a10"/></g><path d="M3 3 L20 21" stroke="#222" stroke-width="1.3"/></svg>
<svg class="a" style="left:521px;top:190px;" width="23" height="24" viewBox="0 0 23 24"><circle cx="11.5" cy="12" r="10.5" fill="url(#wsph)"/><path d="M11.5 1.5 A10.5 10.5 0 0 0 11.5 22.5Z" fill="url(#orb)"/><path d="M11.5 1.5 V22.5" stroke="#7a2a00" stroke-width="1"/></svg>
<div class="a" style="left:550px;top:193px;width:1px;height:20px;background:#cfcfcf"></div>
<svg class="a" style="left:557px;top:192px;" width="20" height="20" viewBox="0 0 20 20"><path d="M7 1 L14 2 L19 8 L17 15 L10 19 L3 16 L1 8 Z" fill="url(#blueb)" stroke="#0a1a60" stroke-width="1"/></svg>
<svg class="a" style="left:581px;top:201px;" width="6" height="4" viewBox="0 0 6 4"><path d="M0 0H6L3 3.5Z" fill="#111"/></svg>
<svg width="0" height="0" style="position:absolute"><defs>
<linearGradient id="slab" x1="0" y1="0" x2="0" y2="1"><stop offset="0" stop-color="#c9c9d3"/><stop offset=".45" stop-color="#b3b3bf"/><stop offset=".5" stop-color="#9c9cab"/><stop offset="1" stop-color="#8b8b99"/></linearGradient>
<linearGradient id="sbar" x1="0" y1="0" x2="0" y2="1"><stop offset="0" stop-color="#fbfbfb"/><stop offset=".45" stop-color="#ececec"/><stop offset=".5" stop-color="#dcdcdc"/><stop offset="1" stop-color="#d2d2d2"/></linearGradient>
<linearGradient id="comp" x1="0" y1="0" x2="0" y2="1"><stop offset="0" stop-color="#e4e4ea"/><stop offset=".08" stop-color="#d8d8e0"/><stop offset=".1" stop-color="#a9a9b7"/><stop offset="1" stop-color="#8f8f9e"/></linearGradient>
<linearGradient id="compw" x1="0" y1="0" x2="0" y2="1"><stop offset="0" stop-color="#fafafa"/><stop offset=".12" stop-color="#f2f2f2"/><stop offset=".14" stop-color="#e6e6e6"/><stop offset="1" stop-color="#cfcfcf"/></linearGradient>
<linearGradient id="band" x1="0" y1="0" x2="0" y2="1"><stop offset="0" stop-color="#9a9a9a"/><stop offset=".06" stop-color="#666"/><stop offset=".07" stop-color="#3e3e3e"/><stop offset="1" stop-color="#3a3a3a"/></linearGradient>
<radialGradient id="navg" cx="50%" cy="50%" r="50%"><stop offset="0" stop-color="#f0f0f0"/><stop offset=".7" stop-color="#cfcfcf"/><stop offset="1" stop-color="#a8a8a8"/></radialGradient>
</defs></svg>
<svg class="a" style="left:0;top:0" width="600" height="864"><path d="M292 269.5 C322.15 269.5 328.85 269 359 269" stroke="#4a4a46" stroke-width="3.4" fill="none"/></svg>
<svg class="a" style="left:0;top:0" width="600" height="864"><path d="M293 323 C322.7 323 329.3 323.5 359 323.5" stroke="#4a4a46" stroke-width="3.4" fill="none"/></svg>
<svg class="a" style="left:0;top:0" width="600" height="864"><path d="M292 397.5 C322.15 397.5 328.85 407 359 407" stroke="#4a4a46" stroke-width="3.4" fill="none"/></svg>
<svg class="a" style="left:0;top:0" width="600" height="864"><path d="M293 452.5 C322.7 452.5 329.3 440 359 440" stroke="#4a4a46" stroke-width="3.4" fill="none"/></svg>
<svg class="a" style="left:0;top:0" width="600" height="864"><path d="M291 525.5 C321.6 525.5 328.4 526 359 526" stroke="#4a4a46" stroke-width="3.4" fill="none"/></svg>
<svg class="a" style="left:0;top:0" width="600" height="864"><path d="M291 575 C321.6 575 328.4 575.5 359 575.5" stroke="#4a4a46" stroke-width="3.4" fill="none"/></svg>
<svg class="a" style="left:0;top:0" width="600" height="864"><path d="M163 679.3 C248.5 679.3 267.5 679.3 353 679.3" stroke="#4a4a46" stroke-width="3.4" fill="none"/></svg>
<svg class="a" style="left:98px;top:258px;" width="49" height="24.5" viewBox="0 0 49 24.5"><rect x=".5" y=".5" width="48" height="23.5" rx="4" fill="url(#slab)" stroke="#4a4a4a"/></svg>
<div class="a t" style="left:106.2px;top:263.70px;font-size:12.4px;color:#1a1a1a;transform:scaleX(0.9968);transform-origin:0 0;">Slider</div>
<svg class="a" style="left:0;top:0" width="600" height="864"><path d="M287 265.75 A4.5 4.5 0 0 1 287 274.75" fill="#fff" stroke="#000" stroke-width="2"/></svg>
<svg class="a" style="left:146px;top:258px;" width="142" height="24.5" viewBox="0 0 142 24.5"><rect x=".5" y=".5" width="141" height="23.5" rx="4" fill="url(#sbar)" stroke="#4a4a4a"/></svg>
<svg class="a" style="left:146px;top:258px;" width="141" height="23.5" viewBox="0 0 141 23.5"><path d="M10.5 12.25 H27.0 M63.0 12.25 H130" stroke="#b0b0b0" stroke-width="1"/><path d="M10.5 8.25 V12.25M22.3 8.25 V12.25M69.5 8.25 V12.25M81.3 8.25 V12.25M93.1 8.25 V12.25M104.9 8.25 V12.25M116.7 8.25 V12.25M128.5 8.25 V12.25" stroke="#b8b8b8" stroke-width="1"/></svg>
<div class="a t" style="left:176px;top:263.50px;font-size:12.4px;color:#111;transform:scaleX(0.9669);transform-origin:0 0;">6.912</div>
<svg class="a" style="left:161.2px;top:265.25px;" width="10" height="10" viewBox="0 0 10 10"><circle cx="5" cy="5" r="3.3" fill="#fff" stroke="#000" stroke-width="2.2"/></svg>
<svg class="a" style="left:101px;top:311.5px;" width="47.5" height="24" viewBox="0 0 47.5 24"><rect x=".5" y=".5" width="46.5" height="23" rx="4" fill="url(#slab)" stroke="#4a4a4a"/></svg>
<div class="a t" style="left:108.45px;top:317.20px;font-size:12.4px;color:#1a1a1a;transform:scaleX(0.9968);transform-origin:0 0;">Slider</div>
<svg class="a" style="left:0;top:0" width="600" height="864"><path d="M288.5 319.0 A4.5 4.5 0 0 1 288.5 328.0" fill="#fff" stroke="#000" stroke-width="2"/></svg>
<svg class="a" style="left:147.5px;top:311.5px;" width="142.0" height="24" viewBox="0 0 142.0 24"><rect x=".5" y=".5" width="141.0" height="23" rx="4" fill="url(#sbar)" stroke="#4a4a4a"/></svg>
<svg class="a" style="left:147.5px;top:311.5px;" width="141.0" height="23" viewBox="0 0 141.0 23"><path d="M10.5 12.0 H33.0 M51.5 12.0 H130.0" stroke="#b0b0b0" stroke-width="1"/><path d="M10.5 8.0 V12.0M22.3 8.0 V12.0M57.7 8.0 V12.0M69.5 8.0 V12.0M81.3 8.0 V12.0M93.1 8.0 V12.0M104.9 8.0 V12.0M116.7 8.0 V12.0M128.5 8.0 V12.0" stroke="#b8b8b8" stroke-width="1"/></svg>
<div class="a t" style="left:183.5px;top:317.00px;font-size:12.4px;color:#111;transform:scaleX(0.9064);transform-origin:0 0;">13</div>
<svg class="a" style="left:168.8px;top:318.5px;" width="10" height="10" viewBox="0 0 10 10"><path d="M5 1.5 L8.5 5 L5 8.5 L1.5 5Z" fill="#fff" stroke="#000" stroke-width="1.6"/></svg>
<svg class="a" style="left:98.5px;top:386.5px;" width="48.0" height="24" viewBox="0 0 48.0 24"><rect x=".5" y=".5" width="47.0" height="23" rx="4" fill="url(#slab)" stroke="#4a4a4a"/></svg>
<div class="a t" style="left:106.2px;top:392.20px;font-size:12.4px;color:#1a1a1a;transform:scaleX(0.9968);transform-origin:0 0;">Slider</div>
<svg class="a" style="left:0;top:0" width="600" height="864"><path d="M286.7 394.0 A4.5 4.5 0 0 1 286.7 403.0" fill="#fff" stroke="#000" stroke-width="2"/></svg>
<svg class="a" style="left:145.5px;top:386.5px;" width="142.2" height="24" viewBox="0 0 142.2 24"><rect x=".5" y=".5" width="141.2" height="23" rx="4" fill="url(#sbar)" stroke="#4a4a4a"/></svg>
<svg class="a" style="left:145.5px;top:386.5px;" width="141.2" height="23" viewBox="0 0 141.2 23"><path d="M10.5 12.0 H68.5 M105.0 12.0 H130.2" stroke="#b0b0b0" stroke-width="1"/><path d="M10.5 8.0 V12.0M22.3 8.0 V12.0M34.1 8.0 V12.0M45.9 8.0 V12.0M57.7 8.0 V12.0M116.7 8.0 V12.0M128.5 8.0 V12.0" stroke="#b8b8b8" stroke-width="1"/></svg>
<div class="a t" style="left:217px;top:392.00px;font-size:12.4px;color:#111;transform:scaleX(0.9830);transform-origin:0 0;">4.320</div>
<svg class="a" style="left:203px;top:393.5px;" width="10" height="10" viewBox="0 0 10 10"><circle cx="5" cy="5" r="3.3" fill="#fff" stroke="#000" stroke-width="2.2"/></svg>
<svg class="a" style="left:99.5px;top:441px;" width="47.5" height="24.5" viewBox="0 0 47.5 24.5"><rect x=".5" y=".5" width="46.5" height="23.5" rx="4" fill="url(#slab)" stroke="#4a4a4a"/></svg>
<div class="a t" style="left:106.95px;top:446.70px;font-size:12.4px;color:#1a1a1a;transform:scaleX(0.9968);transform-origin:0 0;">Slider</div>
<svg class="a" style="left:0;top:0" width="600" height="864"><path d="M287.5 448.75 A4.5 4.5 0 0 1 287.5 457.75" fill="#fff" stroke="#000" stroke-width="2"/></svg>
<svg class="a" style="left:146px;top:441px;" width="142.5" height="24.5" viewBox="0 0 142.5 24.5"><rect x=".5" y=".5" width="141.5" height="23.5" rx="4" fill="url(#sbar)" stroke="#4a4a4a"/></svg>
<svg class="a" style="left:146px;top:441px;" width="141.5" height="23.5" viewBox="0 0 141.5 23.5"><path d="M10.5 12.25 H80.0 M99.0 12.25 H130.5" stroke="#b0b0b0" stroke-width="1"/><path d="M10.5 8.25 V12.25M22.3 8.25 V12.25M34.1 8.25 V12.25M45.9 8.25 V12.25M57.7 8.25 V12.25M69.5 8.25 V12.25M104.9 8.25 V12.25M116.7 8.25 V12.25M128.5 8.25 V12.25" stroke="#b8b8b8" stroke-width="1"/></svg>
<div class="a t" style="left:229px;top:446.50px;font-size:12.4px;color:#111;transform:scaleX(0.9426);transform-origin:0 0;">81</div>
<svg class="a" style="left:248.6px;top:448.25px;" width="10" height="10" viewBox="0 0 10 10"><path d="M5 1.5 L8.5 5 L5 8.5 L1.5 5Z" fill="#fff" stroke="#000" stroke-width="1.6"/></svg>
<svg class="a" style="left:97.5px;top:513.5px;" width="48.0" height="25" viewBox="0 0 48.0 25"><rect x=".5" y=".5" width="47.0" height="24" rx="4" fill="url(#slab)" stroke="#4a4a4a"/></svg>
<div class="a t" style="left:105.2px;top:519.20px;font-size:12.4px;color:#1a1a1a;transform:scaleX(0.9968);transform-origin:0 0;">Slider</div>
<svg class="a" style="left:0;top:0" width="600" height="864"><path d="M285.5 521.5 A4.5 4.5 0 0 1 285.5 530.5" fill="#fff" stroke="#000" stroke-width="2"/></svg>
<svg class="a" style="left:144.5px;top:513.5px;" width="142.0" height="25" viewBox="0 0 142.0 25"><rect x=".5" y=".5" width="141.0" height="24" rx="4" fill="url(#sbar)" stroke="#4a4a4a"/></svg>
<svg class="a" style="left:144.5px;top:513.5px;" width="141.0" height="24" viewBox="0 0 141.0 24"><path d="M10.5 12.5 H63.8 M100.5 12.5 H130.0" stroke="#b0b0b0" stroke-width="1"/><path d="M10.5 8.5 V12.5M22.3 8.5 V12.5M34.1 8.5 V12.5M45.9 8.5 V12.5M57.7 8.5 V12.5M104.9 8.5 V12.5M116.7 8.5 V12.5M128.5 8.5 V12.5" stroke="#b8b8b8" stroke-width="1"/></svg>
<div class="a t" style="left:211.3px;top:519.00px;font-size:12.4px;color:#111;transform:scaleX(0.9895);transform-origin:0 0;">3.904</div>
<svg class="a" style="left:196.8px;top:521.0px;" width="10" height="10" viewBox="0 0 10 10"><circle cx="5" cy="5" r="3.3" fill="#fff" stroke="#000" stroke-width="2.2"/></svg>
<svg class="a" style="left:97.5px;top:563px;" width="48.0" height="24.5" viewBox="0 0 48.0 24.5"><rect x=".5" y=".5" width="47.0" height="23.5" rx="4" fill="url(#slab)" stroke="#4a4a4a"/></svg>
<div class="a t" style="left:105.2px;top:568.70px;font-size:12.4px;color:#1a1a1a;transform:scaleX(0.9968);transform-origin:0 0;">Slider</div>
<svg class="a" style="left:0;top:0" width="600" height="864"><path d="M285.5 570.75 A4.5 4.5 0 0 1 285.5 579.75" fill="#fff" stroke="#000" stroke-width="2"/></svg>
<svg class="a" style="left:144.5px;top:563px;" width="142.0" height="24.5" viewBox="0 0 142.0 24.5"><rect x=".5" y=".5" width="141.0" height="23.5" rx="4" fill="url(#sbar)" stroke="#4a4a4a"/></svg>
<svg class="a" style="left:144.5px;top:563px;" width="141.0" height="23.5" viewBox="0 0 141.0 23.5"><path d="M10.5 12.25 H92.3 M111.7 12.25 H130.0" stroke="#b0b0b0" stroke-width="1"/><path d="M10.5 8.25 V12.25M22.3 8.25 V12.25M34.1 8.25 V12.25M45.9 8.25 V12.25M57.7 8.25 V12.25M69.5 8.25 V12.25M81.3 8.25 V12.25M116.7 8.25 V12.25M128.5 8.25 V12.25" stroke="#b8b8b8" stroke-width="1"/></svg>
<div class="a t" style="left:239.8px;top:568.50px;font-size:12.4px;color:#111;transform:scaleX(0.9716);transform-origin:0 0;">92</div>
<svg class="a" style="left:259.2px;top:570.25px;" width="10" height="10" viewBox="0 0 10 10"><path d="M5 1.5 L8.5 5 L5 8.5 L1.5 5Z" fill="#fff" stroke="#000" stroke-width="1.6"/></svg>
<svg class="a" style="left:0;top:0" width="600" height="864"><path d="M361.8 264.5 A4.5 4.5 0 0 0 361.8 273.5" fill="#fff" stroke="#000" stroke-width="2"/></svg>
<svg class="a" style="left:0;top:0" width="600" height="864"><path d="M361.8 319.5 A4.5 4.5 0 0 0 361.8 328.5" fill="#fff" stroke="#000" stroke-width="2"/></svg>
<svg class="a" style="left:0;top:0" width="600" height="864"><path d="M447.8 264.5 A4.5 4.5 0 0 1 447.8 273.5" fill="#fff" stroke="#000" stroke-width="2"/></svg>
<svg class="a" style="left:0;top:0" width="600" height="864"><path d="M447.8 319.5 A4.5 4.5 0 0 1 447.8 328.5" fill="#fff" stroke="#000" stroke-width="2"/></svg>
<svg class="a" style="left:361.8px;top:239.5px;" width="87" height="116" viewBox="0 0 87 116"><rect x=".5" y=".5" width="86" height="115" rx="3.5" fill="url(#comp)" stroke="#3c3c3c" stroke-width="1.2"/></svg>
<svg class="a" style="left:382.8px;top:241.5px;" width="29" height="111.5" viewBox="0 0 29 111.5"><rect x=".5" y=".5" width="28" height="110.5" rx="3.5" fill="url(#band)" stroke="#222" stroke-width="1"/><text transform="translate(20.2 55.25) rotate(-90)" text-anchor="middle" font-family="Liberation Sans" font-weight="bold" font-size="16.5" fill="#fff" stroke="#fff" stroke-width=".35" textLength="96" lengthAdjust="spacingAndGlyphs">Py transform</text></svg>
<div class="a t" style="left:370.8px;top:262.80px;font-size:12.4px;color:#1a1a1a;">x</div>
<div class="a t" style="left:370.8px;top:317.80px;font-size:12.4px;color:#1a1a1a;">n</div>
<div class="a t" style="left:416.3px;top:262.80px;font-size:12.4px;color:#1a1a1a;">out</div>
<div class="a t" style="left:416.3px;top:317.80px;font-size:12.4px;color:#1a1a1a;">a</div>
<svg class="a" style="left:0;top:0" width="600" height="864"><path d="M361.8 402.5 A4.5 4.5 0 0 0 361.8 411.5" fill="#fff" stroke="#000" stroke-width="2"/></svg>
<svg class="a" style="left:0;top:0" width="600" height="864"><path d="M361.8 435.5 A4.5 4.5 0 0 0 361.8 444.5" fill="#fff" stroke="#000" stroke-width="2"/></svg>
<svg class="a" style="left:0;top:0" width="600" height="864"><path d="M447.8 402.5 A4.5 4.5 0 0 1 447.8 411.5" fill="#fff" stroke="#000" stroke-width="2"/></svg>
<svg class="a" style="left:0;top:0" width="600" height="864"><path d="M447.8 435.5 A4.5 4.5 0 0 1 447.8 444.5" fill="#fff" stroke="#000" stroke-width="2"/></svg>
<svg class="a" style="left:361.8px;top:389px;" width="87" height="72" viewBox="0 0 87 72"><rect x=".5" y=".5" width="86" height="71" rx="3.5" fill="url(#comp)" stroke="#3c3c3c" stroke-width="1.2"/></svg>
<svg class="a" style="left:382.8px;top:391px;" width="29" height="67.5" viewBox="0 0 29 67.5"><rect x=".5" y=".5" width="28" height="66.5" rx="3.5" fill="url(#band)" stroke="#222" stroke-width="1"/><text transform="translate(20.2 33.25) rotate(-90)" text-anchor="middle" font-family="Liberation Sans" font-weight="bold" font-size="16.5" fill="#fff" stroke="#fff" stroke-width=".35" textLength="54" lengthAdjust="spacingAndGlyphs">Py Cast</text></svg>
<div class="a t" style="left:370.8px;top:400.80px;font-size:12.4px;color:#1a1a1a;">x</div>
<div class="a t" style="left:370.8px;top:433.80px;font-size:12.4px;color:#1a1a1a;">n</div>
<div class="a t" style="left:416.3px;top:400.80px;font-size:12.4px;color:#1a1a1a;">out</div>
<div class="a t" style="left:416.3px;top:433.80px;font-size:12.4px;color:#1a1a1a;">a</div>
<svg class="a" style="left:0;top:0" width="600" height="864"><path d="M361.8 521.5 A4.5 4.5 0 0 0 361.8 530.5" fill="#fff" stroke="#000" stroke-width="2"/></svg>
<svg class="a" style="left:0;top:0" width="600" height="864"><path d="M361.8 571.0 A4.5 4.5 0 0 0 361.8 580.0" fill="#fff" stroke="#000" stroke-width="2"/></svg>
<svg class="a" style="left:0;top:0" width="600" height="864"><path d="M447.8 521.5 A4.5 4.5 0 0 1 447.8 530.5" fill="#fff" stroke="#000" stroke-width="2"/></svg>
<svg class="a" style="left:0;top:0" width="600" height="864"><path d="M447.8 571.0 A4.5 4.5 0 0 1 447.8 580.0" fill="#fff" stroke="#000" stroke-width="2"/></svg>
<svg class="a" style="left:361.8px;top:500px;" width="87" height="104" viewBox="0 0 87 104"><rect x=".5" y=".5" width="86" height="103" rx="3.5" fill="url(#comp)" stroke="#3c3c3c" stroke-width="1.2"/></svg>
<svg class="a" style="left:382.8px;top:502px;" width="29" height="99.5" viewBox="0 0 29 99.5"><rect x=".5" y=".5" width="28" height="98.5" rx="3.5" fill="url(#band)" stroke="#222" stroke-width="1"/><text transform="translate(20.2 49.25) rotate(-90)" text-anchor="middle" font-family="Liberation Sans" font-weight="bold" font-size="16.5" fill="#fff" stroke="#fff" stroke-width=".35" textLength="87" lengthAdjust="spacingAndGlyphs">Py function</text></svg>
<div class="a t" style="left:370.8px;top:519.80px;font-size:12.4px;color:#1a1a1a;">x</div>
<div class="a t" style="left:370.8px;top:569.30px;font-size:12.4px;color:#1a1a1a;">n</div>
<div class="a t" style="left:416.3px;top:519.80px;font-size:12.4px;color:#1a1a1a;">out</div>
<div class="a t" style="left:416.3px;top:569.30px;font-size:12.4px;color:#1a1a1a;">a</div>
<svg class="a" style="left:0;top:0" width="600" height="864"><path d="M357.2 674.8 A4.5 4.5 0 0 0 357.2 683.8" fill="#fff" stroke="#000" stroke-width="2"/></svg>
<svg class="a" style="left:0;top:0" width="600" height="864"><path d="M448.2 657.5 A4.5 4.5 0 0 1 448.2 666.5" fill="#fff" stroke="#000" stroke-width="2"/></svg>
<svg class="a" style="left:0;top:0" width="600" height="864"><path d="M448.2 692.5 A4.5 4.5 0 0 1 448.2 701.5" fill="#fff" stroke="#000" stroke-width="2"/></svg>
<svg class="a" style="left:357.2px;top:641.5px;" width="92" height="76" viewBox="0 0 92 76"><rect x=".5" y=".5" width="91" height="75" rx="3.5" fill="url(#compw)" stroke="#3c3c3c" stroke-width="1.2"/></svg>
<svg class="a" style="left:382.8px;top:643.5px;" width="30" height="71.5" viewBox="0 0 30 71.5"><rect x=".5" y=".5" width="29" height="70.5" rx="3.5" fill="url(#band)" stroke="#222" stroke-width="1"/><text transform="translate(20.7 35.25) rotate(-90)" text-anchor="middle" font-family="Liberation Sans" font-weight="bold" font-size="16.5" fill="#fff" stroke="#fff" stroke-width=".35" textLength="56.7" lengthAdjust="spacingAndGlyphs">Py class</text></svg>
<div class="a t" style="left:365.5px;top:673.10px;font-size:12.4px;color:#1a1a1a;">pt</div>
<div class="a t" style="left:416.3px;top:655.80px;font-size:12.4px;color:#1a1a1a;">out</div>
<div class="a t" style="left:416.3px;top:690.80px;font-size:12.4px;color:#1a1a1a;">a</div>
<svg class="a" style="left:0;top:0" width="600" height="864"><path d="M98.5 674.8 A4.5 4.5 0 0 0 98.5 683.8" fill="#fff" stroke="#000" stroke-width="2"/></svg>
<svg class="a" style="left:0;top:0" width="600" height="864"><path d="M157.8 674.8 A4.5 4.5 0 0 1 157.8 683.8" fill="#fff" stroke="#000" stroke-width="2"/></svg>
<svg class="a" style="left:98px;top:667px;" width="60" height="25" viewBox="0 0 60 25"><rect x=".5" y=".5" width="59" height="24" rx="4.5" fill="url(#sbar)" stroke="#4a4a4a"/></svg>
<div class="a t" style="left:122.7px;top:672.50px;font-size:12.4px;color:#1a1a1a;transform:scaleX(0.8962);transform-origin:0 0;">Pt</div>
<svg class="a" style="left:12px;top:766px;" width="58" height="60" viewBox="0 0 58 60"><circle cx="28.4" cy="35.4" r="20" fill="url(#navg)" stroke="#000" stroke-width="1.2"/><circle cx="28.4" cy="35.4" r="18.6" fill="none" stroke="#fff" stroke-width="1.8"/><path d="M28.4 14 A21.5 21.5 0 0 1 48 26.5" stroke="#000" stroke-width="3" fill="none"/><circle cx="48" cy="27" r="2" fill="#000"/><path d="M29 4.5 L33 9.5 L29 14 L25 9.5Z" fill="#000"/><path d="M29 12 V16" stroke="#000" stroke-width="2"/><path d="M25.5 15.8 L31.3 15.8 L28.4 21Z M25.5 55 L31.3 55 L28.4 49.8Z M8.8 32.5 L8.8 38.3 L14 35.4Z M48 32.5 L48 38.3 L42.8 35.4Z" fill="#fff"/></svg>
<svg class="a" style="left:11px;top:836px;" width="17" height="17" viewBox="0 0 17 17"><circle cx="8.5" cy="8.5" r="8" fill="#1a5fc4" stroke="#0a2a80" stroke-width="1"/><circle cx="8.5" cy="8.5" r="5.5" fill="#3ab0f0" opacity=".5"/><rect x="6.8" y="3" width="3.4" height="7" rx="1.2" fill="#fff" stroke="#0a2a80" stroke-width=".6"/><circle cx="8.5" cy="12.8" r="1.6" fill="#fff" stroke="#0a2a80" stroke-width=".6"/></svg>
<div class="a" style="left:600px;top:4px;width:6px;height:30px;background:linear-gradient(90deg,#c9cbce,#dadcdf 4px,#e3e5e8)"></div>
<div class="a" style="left:602px;top:5px;width:790px;height:857px;border-radius:8px 0 0 7px;background:linear-gradient(#e9eef4,#f3f5f8 28px,#e3e7ec);border:1px solid #2a2a2a"></div>
<div class="a" style="left:600px;top:34px;width:8px;height:828px;background:linear-gradient(90deg,#0e0e0e 0 2px,#5a5a5a 2px,#8a8a8a 5px,#b5b5b5 8px);border-bottom-left-radius:7px"></div>
<div class="a" style="left:602px;top:855px;width:776px;height:7px;background:linear-gradient(#f6f7f9,#e9ecef);border-bottom:1px solid #444;border-bottom-left-radius:7px"></div>
<div class="a" style="left:1010px;top:20px;width:368px;height:14px;background:radial-gradient(ellipse at 60% 50%,rgba(190,195,200,.35),rgba(255,255,255,0) 70%)"></div>
<div class="a t" style="left:630px;top:13.84px;font-size:12px;color:#101010;transform:scaleX(0.9841);transform-origin:0 0;">120423.3dm (23 KB) - Rhinoceros (Commercial) (64-bit)</div>
<div class="a" style="left:609px;top:12px;width:16px;height:16px;background:#1b1b1b;border:1px solid #000"></div>
<svg class="a" style="left:610px;top:13px;" width="14" height="14" viewBox="0 0 14 14"><path d="M1 6 L5 2.5 L9 3 L13 1 L12 6 L8 11 L5 12.5 L1.5 10.5 Z" fill="#cfcfcf"/><path d="M5.5 4 L10.5 2.8 L9 6.5Z" fill="#2a2a2a"/><circle cx="3" cy="8.5" r="1" fill="#c33"/></svg>
<div class="a" style="left:608px;top:34px;width:770px;height:821px;background:#e2e6ed;border-left:1px solid #5b5b5b;border-top:1px solid #5b5b5b"></div>
<div class="a" style="left:609px;top:35px;width:769px;height:19px;background:linear-gradient(#eaeef5,#dfe5ef 50%,#d4dbe8)"></div>
<div class="a" style="left:609px;top:53px;width:769px;height:1px;background:#b9c1ce"></div>
<div class="a t" style="left:616.5px;top:38.84px;font-size:12px;color:#5c5862;transform:scaleX(1.0861);transform-origin:0 0;">File</div>
<div class="a t" style="left:648px;top:38.84px;font-size:12px;color:#5c5862;transform:scaleX(1.0156);transform-origin:0 0;">Edit</div>
<div class="a t" style="left:682px;top:38.84px;font-size:12px;color:#5c5862;transform:scaleX(0.9305);transform-origin:0 0;">View</div>
<div class="a t" style="left:721px;top:38.84px;font-size:12px;color:#5c5862;transform:scaleX(0.9685);transform-origin:0 0;">Curve</div>
<div class="a t" style="left:766px;top:38.84px;font-size:12px;color:#5c5862;transform:scaleX(0.9673);transform-origin:0 0;">Surface</div>
<div class="a t" style="left:818px;top:38.84px;font-size:12px;color:#5c5862;transform:scaleX(1.0119);transform-origin:0 0;">Solid</div>
<div class="a t" style="left:858px;top:38.84px;font-size:12px;color:#5c5862;transform:scaleX(0.9883);transform-origin:0 0;">Mesh</div>
<div class="a t" style="left:902px;top:38.84px;font-size:12px;color:#5c5862;transform:scaleX(0.9526);transform-origin:0 0;">Dimension</div>
<div class="a t" style="left:973px;top:38.84px;font-size:12px;color:#5c5862;transform:scaleX(1.0143);transform-origin:0 0;">Transform</div>
<div class="a t" style="left:1042px;top:38.84px;font-size:12px;color:#5c5862;transform:scaleX(1.0353);transform-origin:0 0;">Tools</div>
<div class="a t" style="left:1086px;top:38.84px;font-size:12px;color:#5c5862;transform:scaleX(0.9604);transform-origin:0 0;">Analyze</div>
<div class="a t" style="left:1140px;top:38.84px;font-size:12px;color:#5c5862;transform:scaleX(0.9402);transform-origin:0 0;">Render</div>
<div class="a t" style="left:1191px;top:38.84px;font-size:12px;color:#5c5862;transform:scaleX(0.9539);transform-origin:0 0;">Panels</div>
<div class="a t" style="left:1239px;top:38.84px;font-size:12px;color:#5c5862;transform:scaleX(1.0130);transform-origin:0 0;">Help</div>
<div class="a" style="left:609px;top:54px;width:769px;height:53px;background:#e4e8ee"></div>
<div class="a" style="left:611px;top:58px;width:1px;height:47px;background:#b8bec8"></div>
<div class="a" style="left:613px;top:58px;width:1px;height:47px;background:#b8bec8"></div>
<div class="a" style="left:616px;top:58px;width:762px;height:47px;background:#fff"></div>
<div class="a" style="left:616px;top:86px;width:762px;height:1px;background:#a9b0bb"></div>
<div class="a t" style="left:617px;top:59.59px;font-size:12.3px;color:#000;transform:scaleX(0.9998);transform-origin:0 0;">Drag objects, tap Alt to make a duplicate, press and hold Alt to temporarily toggle osnaps:</div>
<div class="a t" style="left:617px;top:88.59px;font-size:12.3px;color:#000;font-weight:bold;transform:scaleX(0.9497);transform-origin:0 0;">Command:</div>
<div class="a" style="left:609px;top:106px;width:769px;height:2px;background:#cfd4dc"></div>
<div class="a" style="left:609px;top:108px;width:769px;height:107px;background:linear-gradient(#e3e7ee,#dde2ea)"></div>
<div class="a" style="left:612px;top:112px;width:1px;height:98px;background:#b4bac5"></div>
<div class="a" style="left:614px;top:112px;width:1px;height:98px;background:#b4bac5"></div>
<svg class="a" style="left:616px;top:113px;" width="66" height="15" viewBox="0 0 66 15"><path d="M0.5 14 L7.5 0.5 H61 Q65 0.5 65 4 V14" fill="#d3d9e5" stroke="#a4adbd" stroke-width="1"/></svg>
<div class="a t" style="left:625.5px;top:113.84px;font-size:12px;color:#000;transform:scaleX(0.9138);transform-origin:0 0;">Standard</div>
<svg class="a" style="left:680px;top:113px;" width="64" height="15" viewBox="0 0 64 15"><path d="M0.5 14 L7.5 0.5 H59 Q63 0.5 63 4 V14" fill="#d3d9e5" stroke="#a4adbd" stroke-width="1"/></svg>
<div class="a t" style="left:690.8px;top:113.84px;font-size:12px;color:#000;transform:scaleX(0.9150);transform-origin:0 0;">CPlanes</div>
<svg class="a" style="left:742px;top:113px;" width="68" height="15" viewBox="0 0 68 15"><path d="M0.5 14 L7.5 0.5 H63 Q67 0.5 67 4 V14" fill="#d3d9e5" stroke="#a4adbd" stroke-width="1"/></svg>
<div class="a t" style="left:752.5px;top:113.84px;font-size:12px;color:#000;transform:scaleX(0.9759);transform-origin:0 0;">Set View</div>
<svg class="a" style="left:808px;top:113px;" width="60" height="15" viewBox="0 0 60 15"><path d="M0.5 14 L7.5 0.5 H55 Q59 0.5 59 4 V14" fill="#d3d9e5" stroke="#a4adbd" stroke-width="1"/></svg>
<div class="a t" style="left:820.4px;top:113.84px;font-size:12px;color:#000;transform:scaleX(0.9404);transform-origin:0 0;">Display</div>
<svg class="a" style="left:866px;top:113px;" width="53.5" height="15" viewBox="0 0 53.5 15"><path d="M0.5 14 L7.5 0.5 H48.5 Q52.5 0.5 52.5 4 V14" fill="#d3d9e5" stroke="#a4adbd" stroke-width="1"/></svg>
<div class="a t" style="left:876.6px;top:113.84px;font-size:12px;color:#000;transform:scaleX(0.9445);transform-origin:0 0;">Select</div>
<svg class="a" style="left:917.5px;top:113px;" width="104.5" height="15" viewBox="0 0 104.5 15"><path d="M0.5 14 L7.5 0.5 H99.5 Q103.5 0.5 103.5 4 V14" fill="#d3d9e5" stroke="#a4adbd" stroke-width="1"/></svg>
<div class="a t" style="left:929.4px;top:113.84px;font-size:12px;color:#000;transform:scaleX(0.9554);transform-origin:0 0;">Viewport Layout</div>
<svg class="a" style="left:1020px;top:113px;" width="67.40000000000009" height="15" viewBox="0 0 67.40000000000009 15"><path d="M0.5 14 L7.5 0.5 H62.40000000000009 Q66.40000000000009 0.5 66.40000000000009 4 V14" fill="#d3d9e5" stroke="#a4adbd" stroke-width="1"/></svg>
<div class="a t" style="left:1032px;top:113.84px;font-size:12px;color:#000;transform:scaleX(1.0203);transform-origin:0 0;">Visibility</div>
<svg class="a" style="left:1085.4px;top:113px;" width="74.09999999999991" height="15" viewBox="0 0 74.09999999999991 15"><path d="M0.5 14 L7.5 0.5 H69.09999999999991 Q73.09999999999991 0.5 73.09999999999991 4 V14" fill="#d3d9e5" stroke="#a4adbd" stroke-width="1"/></svg>
<div class="a t" style="left:1097px;top:113.84px;font-size:12px;color:#000;transform:scaleX(0.9479);transform-origin:0 0;">Transform</div>
<svg class="a" style="left:1240.2px;top:113px;" width="92.79999999999995" height="15" viewBox="0 0 92.79999999999995 15"><path d="M0.5 14 L7.5 0.5 H87.79999999999995 Q91.79999999999995 0.5 91.79999999999995 4 V14" fill="#d3d9e5" stroke="#a4adbd" stroke-width="1"/></svg>
<div class="a t" style="left:1250.3px;top:113.84px;font-size:12px;color:#000;transform:scaleX(0.9796);transform-origin:0 0;">Surface Tools</div>
<svg class="a" style="left:1331px;top:113px;" width="90" height="15" viewBox="0 0 90 15"><path d="M0.5 14 L7.5 0.5 H85 Q89 0.5 89 4 V14" fill="#d3d9e5" stroke="#a4adbd" stroke-width="1"/></svg>
<div class="a t" style="left:1341px;top:113.84px;font-size:12px;color:#000;transform:scaleX(1.0897);transform-origin:0 0;">Solid Tools</div>
<div class="a" style="left:609px;top:126.5px;width:769px;height:1px;background:#a4adbd"></div>
<svg class="a" style="left:1159px;top:112px;" width="84" height="17" viewBox="0 0 84 17"><path d="M0.5 15.5 L8 0.5 H79 Q83 0.5 83 4 V16" fill="#f5f6f9" stroke="#a4adbd" stroke-width="1"/></svg>
<div class="a" style="left:1160px;top:126.5px;width:82px;height:2px;background:#f3f5f8"></div>
<div class="a t" style="left:1168.6px;top:113.84px;font-size:12px;color:#000;transform:scaleX(0.9725);transform-origin:0 0;">Curve Tools</div>
<div class="a" style="left:616px;top:127px;width:762px;height:26px;background:linear-gradient(#f7f8fa,#eef0f4 50%,#e1e5eb)"></div>
<div class="a" style="left:609px;top:153px;width:769px;height:2px;background:linear-gradient(#c9ced7,#e4e8ee)"></div>
<div class="a" style="left:616px;top:155px;width:762px;height:27px;background:linear-gradient(#f7f8fa,#eef0f4 50%,#e1e5eb)"></div>
<div class="a" style="left:609px;top:182px;width:769px;height:2px;background:linear-gradient(#c9ced7,#e4e8ee)"></div>
<div class="a" style="left:616px;top:184px;width:762px;height:27px;background:linear-gradient(#f7f8fa,#eef0f4 50%,#e1e5eb)"></div>
<div class="a" style="left:609px;top:211px;width:769px;height:2px;background:linear-gradient(#c9ced7,#e4e8ee)"></div>
<div class="a" style="left:612px;top:157px;width:1px;height:23px;background:#b4bac5"></div>
<div class="a" style="left:614px;top:157px;width:1px;height:23px;background:#b4bac5"></div>
<div class="a" style="left:612px;top:186px;width:1px;height:23px;background:#b4bac5"></div>
<div class="a" style="left:614px;top:186px;width:1px;height:23px;background:#b4bac5"></div>
<div class="a" style="left:760px;top:131px;width:1px;height:18px;background:#c2c7cf"></div>
<div class="a" style="left:785.5px;top:131px;width:1px;height:18px;background:#c2c7cf"></div>
<div class="a" style="left:871px;top:131px;width:1px;height:18px;background:#c2c7cf"></div>
<div class="a" style="left:1097px;top:131px;width:1px;height:18px;background:#c2c7cf"></div>
<svg width="0" height="0" style="position:absolute"><defs>
<linearGradient id="bl" x1="0" y1="0" x2="1" y2="1"><stop offset="0" stop-color="#c8d6fa"/><stop offset=".5" stop-color="#7a98e8"/><stop offset="1" stop-color="#4a68c8"/></linearGradient>
<radialGradient id="blb" cx="40%" cy="35%" r="65%"><stop offset="0" stop-color="#e8efff"/><stop offset=".5" stop-color="#7a9af0"/><stop offset="1" stop-color="#3050c0"/></radialGradient>
<radialGradient id="blk" cx="35%" cy="30%" r="70%"><stop offset="0" stop-color="#aaa"/><stop offset=".4" stop-color="#222"/><stop offset="1" stop-color="#000"/></radialGradient>
</defs></svg>
<svg class="a" style="left:618px;top:130px;" width="16" height="16" viewBox="0 0 16 16"><path d="M2 3 Q11 2 12 14" stroke="#5a5a5a" stroke-width="1.2" fill="none"/><circle cx="12" cy="14" r="1.3" fill="#555"/></svg>
<svg class="a" style="left:638.5px;top:130px;" width="16" height="16" viewBox="0 0 16 16"><path d="M2 3 L7 3 L12 14" stroke="#5a5a5a" stroke-width="1.2" fill="none"/><circle cx="12" cy="14" r="1.3" fill="#555"/><path d="M10 2 V5" stroke="#a8a8a8" stroke-width="0.8" fill="none"/></svg>
<svg class="a" style="left:658.5px;top:130px;" width="16" height="16" viewBox="0 0 16 16"><path d="M3 2 Q2 8 8 8 Q13 8 13 14" stroke="#5a5a5a" stroke-width="1.2" fill="none"/><circle cx="13" cy="14" r="1.2" fill="#555"/></svg>
<svg class="a" style="left:678px;top:130px;" width="16" height="16" viewBox="0 0 16 16"><path d="M2 12 Q8 14 13 10 Q15 5 12 2" stroke="#a8a8a8" stroke-width="1.2" fill="none"/><text x="2" y="8" font-size="5" fill="#999">0</text><text x="9" y="6" font-size="5" fill="#999">2</text></svg>
<svg class="a" style="left:698px;top:130px;" width="16" height="16" viewBox="0 0 16 16"><path d="M8 3 Q5 6 8 9 Q11 12 8 14" stroke="#111" stroke-width="1.2" fill="none"/><path d="M9 3 H15 M1 14 H8" stroke="#111" stroke-width="1.5" fill="none"/><rect x="7" y="1.5" width="3" height="3" fill="#fff" stroke="#000"/><rect x="8" y="12.5" width="3" height="3" fill="#fff" stroke="#000"/></svg>
<svg class="a" style="left:718px;top:130px;" width="16" height="16" viewBox="0 0 16 16"><path d="M2 11 L6 6 L9 10 L14 6" stroke="#5a5a5a" stroke-width="1.2" fill="none"/></svg>
<svg class="a" style="left:737.8px;top:130px;" width="16" height="16" viewBox="0 0 16 16"><path d="M3 15 V8 Q3 2 8 2 Q13 2 13 8 V15 M8 2 V15" stroke="#a8a8a8" stroke-width="1.2" fill="none"/></svg>
<svg class="a" style="left:764.3px;top:130px;" width="16" height="16" viewBox="0 0 16 16"><path d="M1 4 Q10 3 12 12" stroke="#5a5a5a" stroke-width="1.2" fill="none"/><circle cx="3" cy="3.5" r="1" fill="#555"/><path d="M12 16 L16 12 L16 16Z" fill="#444"/></svg>
<svg class="a" style="left:789.7px;top:130px;" width="16" height="16" viewBox="0 0 16 16"><path d="M2 4 Q11 3 13 14" stroke="#a8a8a8" stroke-width="1.2" fill="none"/><circle cx="3" cy="4" r="1" fill="#999"/></svg>
<svg class="a" style="left:811.4px;top:130px;" width="16" height="16" viewBox="0 0 16 16"><circle cx="10" cy="10" r="4.5" fill="url(#blb)"/><path d="M1 6 L10 10 M7 1 V8" stroke="#5a5a5a" stroke-width="0.8" fill="none"/></svg>
<svg class="a" style="left:830.3px;top:130px;" width="16" height="16" viewBox="0 0 16 16"><path d="M1 10 L8 3 L15 6 L9 13Z" fill="url(#bl)" stroke="#34c" stroke-width=".6"/><path d="M4 9 L11 5" stroke="#fff" stroke-width="0.6" fill="none"/></svg>
<svg class="a" style="left:850.1px;top:130px;" width="16" height="16" viewBox="0 0 16 16"><path d="M1 8 H12 V13" stroke="#5a5a5a" stroke-width="1.2" fill="none"/><circle cx="1.5" cy="8" r="1" fill="#555"/><path d="M12 16 L16 12 L16 16Z" fill="#444"/></svg>
<svg class="a" style="left:875.6px;top:130px;" width="16" height="16" viewBox="0 0 16 16"><path d="M4 13 Q1 6 5 3 Q10 1 12 5 Q13 9 8 10 L6 13" stroke="#5a5a5a" stroke-width="1.2" fill="none"/><path d="M6 6 L6 12" stroke="#5a5a5a" stroke-width="0.8" fill="none"/></svg>
<svg class="a" style="left:895.4px;top:130px;" width="16" height="16" viewBox="0 0 16 16"><path d="M5 13 Q1 8 5 3 M10 3 Q13 8 11 13" stroke="#a8a8a8" stroke-width="1.2" fill="none"/><path d="M3 8 H7" stroke="#a8a8a8" stroke-width="0.8" fill="none"/></svg>
<svg class="a" style="left:916px;top:130px;" width="16" height="16" viewBox="0 0 16 16"><path d="M1 3 L11 10 L15 8 M3 2 L13 13 M1 7 L9 13" stroke="#111" stroke-width="1.1" fill="none"/></svg>
<svg class="a" style="left:936px;top:130px;" width="16" height="16" viewBox="0 0 16 16"><path d="M2 3 V13 M6 2 V14 M10 3 V13 M14 3 V13 M1 8 H15" stroke="#a8a8a8" stroke-width="0.9" fill="none"/></svg>
<svg class="a" style="left:955.8px;top:130px;" width="16" height="16" viewBox="0 0 16 16"><path d="M5 2 L4 7 L2 14 M4 7 L8 8 L10 13 M4 5 L8 4" stroke="#111" stroke-width="1.6" fill="none"/><circle cx="5.5" cy="2" r="1.5" fill="#111"/><circle cx="12" cy="12" r="2.5" fill="none" stroke="#777"/></svg>
<svg class="a" style="left:975.6px;top:130px;" width="16" height="16" viewBox="0 0 16 16"><path d="M5 2 L4 7 L2 14 M4 7 L8 8 L10 13 M4 5 L8 4" stroke="#111" stroke-width="1.6" fill="none"/><circle cx="5.5" cy="2" r="1.5" fill="#111"/><rect x="10" y="9" width="4" height="3" fill="none" stroke="#111"/><rect x="12" y="12" width="3" height="3" fill="none" stroke="#111"/></svg>
<svg class="a" style="left:996.3px;top:130px;" width="16" height="16" viewBox="0 0 16 16"><path d="M1 11 Q8 16 15 11 M3 11 Q8 14 13 11 M5 11 Q8 12 11 11" stroke="#a8a8a8" stroke-width="1.2" fill="none"/><text x="4" y="5" font-size="4" fill="#aaa">FIT</text></svg>
<svg class="a" style="left:1016px;top:130px;" width="16" height="16" viewBox="0 0 16 16"><path d="M1 11 Q8 16 15 11 M3 11 Q8 14 13 11 M5 11 Q8 12 11 11" stroke="#a8a8a8" stroke-width="1.2" fill="none"/><text x="3" y="5" font-size="4" fill="#aaa">DEG</text></svg>
<svg class="a" style="left:1036px;top:130px;" width="16" height="16" viewBox="0 0 16 16"><path d="M1 11 Q8 16 15 11 M3 11 Q8 14 13 11 M5 11 Q8 12 11 11" stroke="#a8a8a8" stroke-width="1.2" fill="none"/><text x="2" y="5" font-size="4" fill="#aaa">FAIR</text></svg>
<svg class="a" style="left:1055.8px;top:130px;" width="16" height="16" viewBox="0 0 16 16"><circle cx="8" cy="8" r="6" fill="none" stroke="#666" stroke-width="1.3" stroke-dasharray="1.5 2.2"/></svg>
<svg class="a" style="left:1075.6px;top:130px;" width="16" height="16" viewBox="0 0 16 16"><path d="M3 2 V14 M13 2 V14 M3 8 H13" stroke="#5a5a5a" stroke-width="1.2" fill="none"/><path d="M1 2 H5 M1 14 H5 M11 2 H15 M11 14 H15" stroke="#5a5a5a" stroke-width="1" fill="none"/></svg>
<svg class="a" style="left:1101px;top:130px;" width="16" height="16" viewBox="0 0 16 16"><path d="M3 6 L9 2 L14 9 L7 13 Z" stroke="#a8a8a8" stroke-width="1.2" fill="none"/></svg>
<svg class="a" style="left:1122px;top:130px;" width="16" height="16" viewBox="0 0 16 16"><circle cx="8" cy="8" r="3.5" fill="none" stroke="#777" stroke-width="1.2"/><path d="M8 1 V3 M8 13 V15 M1 8 H3 M13 8 H15" stroke="#a8a8a8" stroke-width="1.4" fill="none"/></svg>
<svg class="a" style="left:1142px;top:130px;" width="16" height="16" viewBox="0 0 16 16"><path d="M3 12 L13 10 M5 11 Q7 2 9 3 Q11 4 12 10" stroke="#a8a8a8" stroke-width="1.2" fill="none"/></svg>
<svg class="a" style="left:1161px;top:130px;" width="16" height="16" viewBox="0 0 16 16"><path d="M2 13 L5 6 L9 6 L14 2" stroke="#111" stroke-width="0.9" fill="none"/><rect x="1" y="12" width="2.5" height="2.5" fill="#fff" stroke="#000" stroke-width=".9"/><rect x="1" y="6" width="2.5" height="2.5" fill="#fff" stroke="#000" stroke-width=".9"/><rect x="7" y="5" width="2.5" height="2.5" fill="#fff" stroke="#000" stroke-width=".9"/><rect x="12.5" y="1.5" width="2.5" height="2.5" fill="#fff" stroke="#000" stroke-width=".9"/></svg>
<svg class="a" style="left:1183px;top:130px;" width="16" height="16" viewBox="0 0 16 16"><path d="M3 7 H8 M8 9 V14" stroke="#a8a8a8" stroke-width="1.2" fill="none"/><path d="M9 5 L13 9 M13 5 L9 9" stroke="#e22" stroke-width="1.2" fill="none"/></svg>
<svg class="a" style="left:1202px;top:130px;" width="16" height="16" viewBox="0 0 16 16"><path d="M2 7 H7 M12 5 L9 8 V14" stroke="#a8a8a8" stroke-width="1.2" fill="none"/></svg>
<svg class="a" style="left:1223px;top:130px;" width="16" height="16" viewBox="0 0 16 16"><path d="M5 2 Q9 4 8 9 Q9 12 13 15" stroke="#5a5a5a" stroke-width="1.1" fill="none"/></svg>
<svg class="a" style="left:1242px;top:130px;" width="16" height="16" viewBox="0 0 16 16"><path d="M2 13 Q2 8 5 7 L9 4 L14 9" stroke="#5a5a5a" stroke-width="1.2" fill="none"/></svg>
<svg class="a" style="left:1262px;top:130px;" width="16" height="16" viewBox="0 0 16 16"><path d="M1 6 Q8 0 15 6 M3 8 Q8 4 13 8 M6 14 Q8 12 10 14" stroke="#a8a8a8" stroke-width="1.1" fill="none"/></svg>
<svg class="a" style="left:1282px;top:130px;" width="16" height="16" viewBox="0 0 16 16"><rect x="2" y="2" width="8" height="7" fill="#ddd" stroke="#333"/><circle cx="10" cy="10" r="5" fill="#ccc" stroke="#333"/></svg>
<svg class="a" style="left:1302px;top:130px;" width="16" height="16" viewBox="0 0 16 16"><ellipse cx="8" cy="3" rx="5" ry="2" fill="none" stroke="#999"/><rect x="2" y="6" width="12" height="7" fill="#6b8cf0" stroke="#34a"/><ellipse cx="8" cy="9.5" rx="3.5" ry="1.5" fill="#fff"/><path d="M12 16 L16 12 L16 16Z" fill="#444"/></svg>
<svg class="a" style="left:618.0px;top:160px;" width="16" height="16" viewBox="0 0 16 16"><path d="M2 4 L13 2 L11 13 L3 14Z" fill="url(#bl)" stroke="#3040a0" stroke-width=".6"/><path d="M7 3 L6 13 M2 9 L12 8" stroke="#fff" stroke-width="0.6" fill="none"/></svg>
<svg class="a" style="left:637.97px;top:160px;" width="16" height="16" viewBox="0 0 16 16"><circle cx="8" cy="8" r="5.5" fill="url(#blb)"/><circle cx="8" cy="8" r="2.5" fill="#fff"/></svg>
<svg class="a" style="left:657.94px;top:160px;" width="16" height="16" viewBox="0 0 16 16"><path d="M4 3 L9 1 L12 6 L7 13 L3 10Z" fill="url(#bl)" stroke="#3040a0" stroke-width=".6"/></svg>
<svg class="a" style="left:677.91px;top:160px;" width="16" height="16" viewBox="0 0 16 16"><path d="M1 13 Q3 4 14 2 L12 6 Q6 8 5 14Z" fill="url(#bl)" stroke="#3040a0" stroke-width=".6"/></svg>
<svg class="a" style="left:697.88px;top:160px;" width="16" height="16" viewBox="0 0 16 16"><path d="M3 2 L13 2 L13 13 L3 13Z" fill="url(#bl)" stroke="#3040a0" stroke-width=".6"/><path d="M8 2 V13 M3 8 H13" stroke="#cde" stroke-width="0.8" fill="none"/></svg>
<svg class="a" style="left:717.85px;top:160px;" width="16" height="16" viewBox="0 0 16 16"><path d="M1 7 L7 2 L15 9 L9 14Z" fill="url(#bl)" stroke="#3040a0" stroke-width=".6"/><path d="M4 7 L8 4 L12 9 L8 11Z" fill="#fff"/></svg>
<svg class="a" style="left:737.8199999999999px;top:160px;" width="16" height="16" viewBox="0 0 16 16"><path d="M1 3 H15 V13 H1Z" fill="url(#bl)" stroke="#3040a0" stroke-width=".6"/><path d="M8 3 V13 M1 8 H15" stroke="#dde" stroke-width="0.9" fill="none"/><path d="M12 16 L16 12 L16 16Z" fill="#444"/></svg>
<svg class="a" style="left:757.79px;top:160px;" width="16" height="16" viewBox="0 0 16 16"><path d="M1 3 H15 V13 H1Z" fill="url(#bl)" stroke="#3040a0" stroke-width=".6"/><path d="M8 3 V13 M1 8 H15" stroke="#dde" stroke-width="0.9" fill="none"/></svg>
<svg class="a" style="left:777.76px;top:160px;" width="16" height="16" viewBox="0 0 16 16"><path d="M4 4 L12 1 L12 12 L4 15Z" fill="url(#bl)" stroke="#3040a0" stroke-width=".6"/><path d="M8 3 V14" stroke="#dde" stroke-width="0.8" fill="none"/></svg>
<svg class="a" style="left:797.73px;top:160px;" width="16" height="16" viewBox="0 0 16 16"><path d="M1 8 L8 1 L15 8 L8 15Z" fill="url(#bl)" stroke="#3040a0" stroke-width=".6"/><path d="M4 4 L12 12 M12 4 L4 12" stroke="#dde" stroke-width="0.8" fill="none"/></svg>
<svg class="a" style="left:817.7px;top:160px;" width="16" height="16" viewBox="0 0 16 16"><path d="M5 2 L11 1 V14 L5 15Z" fill="url(#bl)" stroke="#3040a0" stroke-width=".6"/><path d="M1 8 H15" stroke="#333" stroke-width="1" fill="none"/></svg>
<svg class="a" style="left:837.67px;top:160px;" width="16" height="16" viewBox="0 0 16 16"><rect x="1" y="3" width="14" height="10" fill="#3a3"/><rect x="1" y="3" width="14" height="3" fill="#2c2"/><rect x="1" y="6" width="5" height="4" fill="#e33"/><rect x="6" y="6" width="5" height="4" fill="#a4e"/><rect x="11" y="8" width="4" height="5" fill="#36f"/></svg>
<svg class="a" style="left:857.64px;top:160px;" width="16" height="16" viewBox="0 0 16 16"><path d="M2 4 Q8 1 14 4 V14 Q8 12 2 14Z" fill="url(#bl)" stroke="#3040a0" stroke-width=".6"/><path d="M12 16 L16 12 L16 16Z" fill="#444"/></svg>
<svg class="a" style="left:877.61px;top:160px;" width="16" height="16" viewBox="0 0 16 16"><path d="M2 3 Q8 1 14 3 Q12 8 14 13 Q8 15 2 13 Q4 8 2 3Z" fill="url(#bl)" stroke="#3040a0" stroke-width=".6"/></svg>
<svg class="a" style="left:897.5799999999999px;top:160px;" width="16" height="16" viewBox="0 0 16 16"><path d="M2 14 Q3 2 8 2 Q13 2 14 14Z" fill="url(#bl)" stroke="#3040a0" stroke-width=".6"/></svg>
<svg class="a" style="left:917.55px;top:160px;" width="16" height="16" viewBox="0 0 16 16"><path d="M8 2 L14 14 H2Z" fill="url(#bl)" stroke="#3040a0" stroke-width=".6"/></svg>
<svg class="a" style="left:937.52px;top:160px;" width="16" height="16" viewBox="0 0 16 16"><path d="M2 3 L5 1 L15 12 L12 15Z" fill="url(#bl)" stroke="#3040a0" stroke-width=".6"/></svg>
<svg class="a" style="left:957.49px;top:160px;" width="16" height="16" viewBox="0 0 16 16"><path d="M1 5 Q6 0 11 4 L12 12 Q6 14 1 10Z" fill="url(#bl)" stroke="#3040a0" stroke-width=".6"/><ellipse cx="11" cy="10" rx="4.5" ry="3" fill="#bbb" stroke="#666" stroke-width=".6"/></svg>
<svg class="a" style="left:977.46px;top:160px;" width="16" height="16" viewBox="0 0 16 16"><path d="M1 13 Q3 3 13 2 L14 6 Q6 7 5 14Z" fill="url(#bl)" stroke="#3040a0" stroke-width=".6"/><text x="10" y="16" font-size="5" fill="#555">1</text></svg>
<svg class="a" style="left:997.43px;top:160px;" width="16" height="16" viewBox="0 0 16 16"><path d="M3 13 Q4 3 13 2 L14 8 Q8 7 7 13Z" fill="url(#bl)" stroke="#3040a0" stroke-width=".6"/><text x="2" y="16" font-size="5" fill="#555">2</text></svg>
<svg class="a" style="left:1017.4000000000001px;top:160px;" width="16" height="16" viewBox="0 0 16 16"><path d="M1 2 H15 L10 9 V15 H6 V9Z" fill="url(#bl)" stroke="#3040a0" stroke-width=".6"/></svg>
<svg class="a" style="left:1037.37px;top:160px;" width="16" height="16" viewBox="0 0 16 16"><path d="M2 15 V6 Q2 1 8 1 Q14 1 14 6 V15 Q11 12 8 15 Q5 12 2 15Z" fill="url(#bl)" stroke="#3040a0" stroke-width=".6"/></svg>
<svg class="a" style="left:1057.34px;top:160px;" width="16" height="16" viewBox="0 0 16 16"><rect x="1" y="1" width="14" height="14" fill="#7a9ae8" stroke="#345" stroke-width=".7"/><rect x="3" y="3" width="10" height="10" fill="#4a6ad0"/><circle cx="7" cy="7" r="2" fill="#9ab"/></svg>
<svg class="a" style="left:1077.31px;top:160px;" width="16" height="16" viewBox="0 0 16 16"><rect x="1" y="1" width="14" height="14" fill="#4a5aa8"/><path d="M1 4 H15 M1 7 H15 M1 10 H15 M1 13 H15 M4 1 V15 M7 1 V15 M10 1 V15 M13 1 V15" stroke="#9ab0f0" stroke-width="0.8" fill="none"/></svg>
<svg class="a" style="left:618.0px;top:188px;" width="16" height="16" viewBox="0 0 16 16"><path d="M2 2 V8 M2 2 H6 M6 13 H14 M14 8 V13" stroke="#777" stroke-width=".9" fill="none"/><circle cx="8" cy="13" r="1" fill="#333"/><circle cx="11" cy="13" r="1" fill="#333"/></svg>
<svg class="a" style="left:637.97px;top:188px;" width="16" height="16" viewBox="0 0 16 16"><path d="M3 2 V13 H13 V8" stroke="#777" stroke-width=".9" fill="none"/><circle cx="3" cy="13" r="1" fill="#333"/><circle cx="13" cy="13" r="1" fill="#333"/></svg>
<svg class="a" style="left:657.94px;top:188px;" width="16" height="16" viewBox="0 0 16 16"><path d="M2 3 H13 V13 M8 13 H13" stroke="#777" stroke-width=".9" fill="none"/><circle cx="9" cy="13" r="1" fill="#333"/></svg>
<svg class="a" style="left:677.91px;top:188px;" width="16" height="16" viewBox="0 0 16 16"><path d="M2 8 L8 2 L14 8 L8 14" stroke="#777" stroke-width=".9" fill="none"/><circle cx="8" cy="14" r="1" fill="#333"/></svg>
<svg class="a" style="left:697.88px;top:188px;" width="16" height="16" viewBox="0 0 16 16"><path d="M2 6 L8 13 L14 4" stroke="#777" stroke-width=".9" fill="none"/><circle cx="8" cy="13" r="1" fill="#333"/></svg>
<svg class="a" style="left:717.85px;top:188px;" width="16" height="16" viewBox="0 0 16 16"><path d="M3 1 V15 M3 9 L12 3 M3 9 L13 12" stroke="#5a5a5a" stroke-width="0.9" fill="none"/><text x="9" y="15" font-size="4" fill="#888">45</text></svg>
<svg class="a" style="left:737.8199999999999px;top:188px;" width="16" height="16" viewBox="0 0 16 16"><path d="M2 14 Q6 5 14 4" stroke="#a8a8a8" stroke-width="1" fill="none"/><text x="9" y="6" font-size="5" fill="#aaa">R</text></svg>
<svg class="a" style="left:757.79px;top:188px;" width="16" height="16" viewBox="0 0 16 16"><path d="M2 14 Q6 5 14 4" stroke="#a8a8a8" stroke-width="1" fill="none"/><text x="9" y="6" font-size="5" fill="#aaa">D</text></svg>
<svg class="a" style="left:777.76px;top:188px;" width="16" height="16" viewBox="0 0 16 16"><path d="M1 6 L8 13 L15 6 L15 9 L8 16 L1 9Z" fill="#3a50d0"/><path d="M1 6 L8 13 L15 6" fill="none" stroke="#111" stroke-width="1.2"/><path d="M3 4 Q8 0 13 4" stroke="#333" stroke-dasharray="1.5 1.5" fill="none"/></svg>
<svg class="a" style="left:797.73px;top:188px;" width="16" height="16" viewBox="0 0 16 16"><text x="1" y="11" font-size="6" fill="#aaa" font-family="Liberation Sans">TEXT</text></svg>
<svg class="a" style="left:817.7px;top:188px;" width="16" height="16" viewBox="0 0 16 16"><text x="1" y="11" font-size="6" fill="#aaa" font-family="Liberation Sans">TEXT</text><path d="M10 4 L14 1" stroke="#777" stroke-width="0.8" fill="none"/></svg>
<svg class="a" style="left:837.67px;top:188px;" width="16" height="16" viewBox="0 0 16 16"><path d="M2 14 L6 11 L9 5 H15" stroke="#a8a8a8" stroke-width="1" fill="none"/><text x="10" y="7" font-size="4" fill="#aaa">[2]</text></svg>
<svg class="a" style="left:857.64px;top:188px;" width="16" height="16" viewBox="0 0 16 16"><path d="M2 14 L8 8 V3 H15" stroke="#777" stroke-width=".9" fill="none"/><circle cx="8" cy="3" r="1" fill="#333"/></svg>
<svg class="a" style="left:877.61px;top:188px;" width="16" height="16" viewBox="0 0 16 16"><path d="M2 14 V9 H14 V14 M4 5 Q8 2 12 5" stroke="#a8a8a8" stroke-width="1" fill="none"/></svg>
<svg class="a" style="left:897.5799999999999px;top:188px;" width="16" height="16" viewBox="0 0 16 16"><path d="M2 14 V9 H8 V14 M5 9 V6 H14 V9 M9 4 H15" stroke="#777" stroke-width=".9" fill="none"/></svg>
<svg class="a" style="left:917.55px;top:188px;" width="16" height="16" viewBox="0 0 16 16"><ellipse cx="8" cy="8" rx="6.5" ry="5" fill="none" stroke="#888" stroke-width="1.1"/><text x="4" y="10" font-size="5" fill="#777">123</text></svg>
<svg class="a" style="left:937.52px;top:188px;" width="16" height="16" viewBox="0 0 16 16"><circle cx="7" cy="7" r="5.5" fill="#ddd" stroke="#999"/><circle cx="10" cy="10" r="5.5" fill="#ccc" stroke="#999"/><path d="M5 13 L13 5 M3 10 L10 3 M7 15 L15 7" stroke="#aaa" stroke-width="0.6" fill="none"/></svg>
<svg class="a" style="left:957.49px;top:188px;" width="16" height="16" viewBox="0 0 16 16"><path d="M3 2 V15 M1 4 H5 M1 13 H5 M5 8 H15 M9 5 L13 8 L9 11" stroke="#111" stroke-width="1.2" fill="none"/><rect x="7" y="6" width="6" height="4" fill="none" stroke="#000"/></svg>
<svg class="a" style="left:977.46px;top:188px;" width="16" height="16" viewBox="0 0 16 16"><path d="M4 2 V15 M1 2 H7 M1 15 H7 M8 9 L10 12 L15 5" stroke="#111" stroke-width="1.3" fill="none"/></svg>
<svg class="a" style="left:997.43px;top:188px;" width="16" height="16" viewBox="0 0 16 16"><path d="M2 6 L8 3 L14 6 V13 L8 16 L2 13Z" fill="#f2f2f2" stroke="#999" stroke-width=".8"/><path d="M8 9 V16 M2 6 L8 9 L14 6" stroke="#aaa" stroke-width="0.7" fill="none"/><path d="M10 8 L15 1" stroke="#e85a10" stroke-width="2" fill="none"/></svg>
<svg class="a" style="left:1017.4000000000001px;top:188px;" width="16" height="16" viewBox="0 0 16 16"><path d="M1 9 H11 M1 12 H13 M1 15 H13" stroke="#a8a8a8" stroke-width="0.9" fill="none"/><path d="M9 4 L14 2" stroke="#777" stroke-width="1" fill="none"/><path d="M9 2 Q12 0 14 3" stroke="#999" fill="none" stroke-width=".8"/></svg>
<svg class="a" style="left:1037.37px;top:188px;" width="16" height="16" viewBox="0 0 16 16"><path d="M1 8 H6 L8 6 H15 V15 H1Z" fill="#f5c030" stroke="#9a7010" stroke-width=".8"/><path d="M2 10 L4 15 H15 L13 10Z" fill="#ffd84a"/><path d="M6 2 V9 M6 2 L10 6 M8 1 L14 5" stroke="#111" stroke-width="0.9" fill="none"/></svg>
<svg class="a" style="left:1057.34px;top:188px;" width="16" height="16" viewBox="0 0 16 16"><circle cx="8" cy="8" r="6" fill="url(#blk)"/><path d="M12 16 L16 12 L16 16Z" fill="#444"/></svg>
<svg class="a" style="left:1077.31px;top:188px;" width="16" height="16" viewBox="0 0 16 16"><path d="M8 4 Q13 4 13 9 Q13 14 8 14 Q3 14 3 9 Q3 6 6 6 Q10 6 10 9 Q10 11 8 11" stroke="#5a5a5a" stroke-width="1.2" fill="none"/><path d="M11 3 L13 0" stroke="#111" stroke-width="1" fill="none"/></svg>
<svg class="a" style="left:1097.28px;top:188px;" width="16" height="16" viewBox="0 0 16 16"><rect x="1" y="8" width="7" height="7" fill="#fff" stroke="#000" stroke-width="1.2"/><path d="M5 6 L10 2 M5 6 L5 4 M5 6 L7 6" stroke="#111" stroke-width="1" fill="none"/><text x="10" y="6" font-size="6" font-weight="bold" fill="#000">A</text></svg>
<div class="a" style="left:609px;top:211px;width:769px;height:4px;background:#e2e6ed"></div>
<div class="a" style="left:609px;top:215px;width:1px;height:597px;background:#e2e6ed"></div>
<div class="a" style="left:610px;top:215px;width:302px;height:300px;overflow:hidden;background-color:#9d9d9d;background-image:linear-gradient(90deg,rgba(0,0,0,.11) 1px,transparent 1px),linear-gradient(rgba(0,0,0,.11) 1px,transparent 1px),linear-gradient(90deg,rgba(0,0,0,.035) 1px,transparent 1px),linear-gradient(rgba(0,0,0,.035) 1px,transparent 1px);background-size:35px 35px,35px 35px,7.0px 7.0px,7.0px 7.0px;background-position:1.90px 0,0 28.00px,1.90px 0,0 0.00px"></div>
<div class="a" style="left:916px;top:215px;width:457px;height:300px;background:#9d9d9d"></div>
<div class="a" style="left:610px;top:519px;width:302px;height:293px;overflow:hidden;background-color:#9d9d9d;background-image:linear-gradient(90deg,rgba(0,0,0,.11) 1px,transparent 1px),linear-gradient(rgba(0,0,0,.11) 1px,transparent 1px),linear-gradient(90deg,rgba(0,0,0,.035) 1px,transparent 1px),linear-gradient(rgba(0,0,0,.035) 1px,transparent 1px);background-size:22.6px 22.6px,22.6px 22.6px,4.5200000000000005px 4.5200000000000005px,4.5200000000000005px 4.5200000000000005px;background-position:13.10px 0,0 4.30px,-0.46px 0,0 -0.22px"></div>
<div class="a" style="left:916px;top:519px;width:457px;height:293px;overflow:hidden;background-color:#9d9d9d;background-image:linear-gradient(90deg,rgba(0,0,0,.11) 1px,transparent 1px),linear-gradient(rgba(0,0,0,.11) 1px,transparent 1px),linear-gradient(90deg,rgba(0,0,0,.035) 1px,transparent 1px),linear-gradient(rgba(0,0,0,.035) 1px,transparent 1px);background-size:22.7px 22.7px,22.7px 22.7px,4.54px 4.54px,4.54px 4.54px;background-position:7.50px 0,0 6.10px,2.96px 0,0 1.56px"></div>
<div class="a" style="left:912px;top:215px;width:4px;height:597px;background:#e6e9ee"></div>
<div class="a" style="left:610px;top:515px;width:763px;height:4px;background:#e6e9ee"></div>
<div class="a" style="left:1373px;top:215px;width:5px;height:597px;background:#e2e6ed"></div>
<svg class="a" style="left:0;top:0;clip-path:inset(215px 466px 349px 610px)" width="1378" height="864"><path d="M682.4 215 V383.5" stroke="#3c9a3c" stroke-width="1.5"/><path d="M682.4 383.5 H912" stroke="#a83030" stroke-width="1.3"/><path d="M682.4 383.5 L659.9 410.3 A35 35 0 0 1 647.4 383.5 Z" fill="rgba(125,20,20,.55)" stroke="#a01010" stroke-width="1"/><path d="M682.4 383.5 L656.3 406.8 M682.4 383.5 L653.2 402.7 M682.4 383.5 L650.7 398.3 M682.4 383.5 L648.9 393.5 M682.4 383.5 L647.8 388.6 " stroke="#b01818" stroke-width=".9"/><path d="M682.4 383.5 L705.4 357.1 A35 35 0 0 1 717.4 383.5 Z" fill="rgba(125,20,20,.55)" stroke="#a01010" stroke-width="1"/><path d="M682.4 383.5 L708.9 360.6 M682.4 383.5 L711.9 364.6 M682.4 383.5 L714.2 369.0 M682.4 383.5 L716.0 373.7 M682.4 383.5 L717.0 378.5 " stroke="#b01818" stroke-width=".9"/><path d="M752.4 383.5 L756.1 418.3 A35 35 0 0 1 717.4 383.5 Z" fill="rgba(125,20,20,.55)" stroke="#a01010" stroke-width="1"/><path d="M752.4 383.5 L747.7 418.2 M752.4 383.5 L739.6 416.1 M752.4 383.5 L732.3 412.1 M752.4 383.5 L726.0 406.5 M752.4 383.5 L721.3 399.6 M752.4 383.5 L718.4 391.8 " stroke="#b01818" stroke-width=".9"/><path d="M752.4 383.5 L748.7 348.7 A35 35 0 0 1 787.4 383.5 Z" fill="rgba(125,20,20,.55)" stroke="#a01010" stroke-width="1"/><path d="M752.4 383.5 L757.1 348.8 M752.4 383.5 L765.2 350.9 M752.4 383.5 L772.5 354.9 M752.4 383.5 L778.8 360.5 M752.4 383.5 L783.5 367.4 M752.4 383.5 L786.4 375.2 " stroke="#b01818" stroke-width=".9"/><path d="M682.4 383.5 H787.5" stroke="#b01010" stroke-width="2"/><path d="M739.8 305.3 L748.2 313.7 M748.2 305.3 L739.8 313.7" stroke="#b00000" stroke-width="2.6"/><path d="M647 449 V478 H676" stroke="#777" stroke-width="1.2" fill="none"/></svg>
<div class="a t" style="left:647px;top:440.50px;font-size:13px;color:#707070;">y</div>
<div class="a t" style="left:679.8px;top:471.50px;font-size:13px;color:#707070;">x</div>
<svg class="a" style="left:0;top:0;clip-path:inset(519px 466px 52px 610px)" width="1378" height="864"><path d="M714 519 V795" stroke="#3c9a3c" stroke-width="1.2"/><path d="M714 795 H912" stroke="#a83030" stroke-width="1.3"/><defs><linearGradient id="frg" x1="0" y1="0" x2="0" y2="1"><stop offset="0" stop-color="rgba(225,140,140,.9)"/><stop offset=".1" stop-color="rgba(175,70,70,.62)"/><stop offset=".5" stop-color="rgba(150,45,45,.55)"/><stop offset=".9" stop-color="rgba(175,70,70,.62)"/><stop offset="1" stop-color="rgba(225,140,140,.9)"/></linearGradient><linearGradient id="frg2" x1="0" y1="0" x2="0" y2="1"><stop offset="0" stop-color="rgba(220,130,130,.9)"/><stop offset=".12" stop-color="rgba(160,60,60,.6)"/><stop offset=".5" stop-color="rgba(120,40,40,.55)"/><stop offset=".88" stop-color="rgba(160,60,60,.6)"/><stop offset="1" stop-color="rgba(220,130,130,.9)"/></linearGradient></defs><path d="M691.6 524.6 H736.3 Q721.7 659.5 736.3 794.5 H691.6 Q708 659.5 691.6 524.6Z" fill="url(#frg)" stroke="#a01010" stroke-width="1"/><path d="M736.3 524.6 H781.7 Q766 590 759.5 626.6 Q753 590 736.3 524.6Z M759.5 626.6 Q754 659 759.5 691.2 Q765 659 759.5 626.6Z M759.5 691.2 Q766 728 781.7 794.5 H736.3 Q753 728 759.5 691.2Z" fill="url(#frg2)" stroke="#a01010" stroke-width="1"/><clipPath id="frclip"><path d="M691.6 524.6 H736.3 Q721.7 659.5 736.3 794.5 H691.6 Q708 659.5 691.6 524.6Z"/><path d="M736.3 524.6 H781.7 Q766 590 759.5 626.6 Q753 590 736.3 524.6Z M759.5 626.6 Q754 659 759.5 691.2 Q765 659 759.5 626.6Z M759.5 691.2 Q766 728 781.7 794.5 H736.3 Q753 728 759.5 691.2Z"/></clipPath><g clip-path="url(#frclip)"><path d="M690 547.1 H783 M690 569.7 H783 M690 591.8 H783 M690 615.0 H783 M690 637.2 H783 M690 659.7 H783 M690 682.2 H783 M690 704.4 H783 M690 727.6 H783 M690 750.1 H783 M690 772.3 H783 " stroke="#b01515" stroke-width="1"/></g><path d="M714 519 V795" stroke="rgba(60,150,60,.55)" stroke-width="1.2"/><path d="M691 795 H782" stroke="#b01010" stroke-width="1.6"/><path d="M749.4 790.8 L757.8000000000001 799.2 M757.8000000000001 790.8 L749.4 799.2" stroke="#b00000" stroke-width="2.6"/><path d="M647 747 V775.5 H676" stroke="#777" stroke-width="1.2" fill="none"/></svg>
<div class="a t" style="left:648.5px;top:737.50px;font-size:13px;color:#707070;">z</div>
<div class="a t" style="left:679.8px;top:769.00px;font-size:13px;color:#707070;">x</div>
<svg class="a" style="left:0;top:0;clip-path:inset(519px 5px 52px 916px)" width="1378" height="864"><path d="M1151 519 V527" stroke="#3c9a3c" stroke-width="1.2"/><path d="M1151 798 H1373" stroke="#a83030" stroke-width="1.6"/><defs><radialGradient id="rtg1" gradientUnits="userSpaceOnUse" cx="1139" cy="607" r="14"><stop offset="0" stop-color="rgba(255,225,225,.95)"/><stop offset=".5" stop-color="rgba(240,170,170,.45)"/><stop offset="1" stop-color="rgba(200,60,60,0)"/></radialGradient><radialGradient id="rtg2" gradientUnits="userSpaceOnUse" cx="1161" cy="716" r="14"><stop offset="0" stop-color="rgba(255,225,225,.95)"/><stop offset=".5" stop-color="rgba(240,170,170,.45)"/><stop offset="1" stop-color="rgba(200,60,60,0)"/></radialGradient><linearGradient id="rtg" x1="0" y1="0" x2="1" y2="0"><stop offset="0" stop-color="#b23a3a"/><stop offset=".45" stop-color="#c85050"/><stop offset="1" stop-color="#b03232"/></linearGradient></defs><path d="M1150.7 528.3 C1138 550 1128.2 580 1128.2 615 V707.7 C1128.2 742 1138 772 1150.7 795.5 C1163.5 772 1173.6 742 1173.6 707.7 V615 C1173.6 580 1163.5 550 1150.7 528.3Z" fill="url(#rtg)"/><path d="M1150.7 528.3 C1138 550 1128.2 580 1128.2 615 V707.7 C1128.2 742 1138 772 1150.7 795.5 C1163.5 772 1173.6 742 1173.6 707.7 V615 C1173.6 580 1163.5 550 1150.7 528.3Z" fill="url(#rtg1)"/><path d="M1150.7 528.3 C1138 550 1128.2 580 1128.2 615 V707.7 C1128.2 742 1138 772 1150.7 795.5 C1163.5 772 1173.6 742 1173.6 707.7 V615 C1173.6 580 1163.5 550 1150.7 528.3Z" fill="url(#rtg2)"/><path d="M1150.7 528.3 C1138 580 1134.8 620 1134.8 662 C1134.8 704 1138 745 1150.7 795.5 M1150.7 528.3 C1163.5 580 1166.3 620 1166.3 662 C1166.3 704 1163.5 745 1150.7 795.5" stroke="#9a1515" stroke-width=".9" fill="none"/><path d="M1150.7 528.3 V795.5" stroke="rgba(90,110,40,.7)" stroke-width="1"/><path d="M1150.7 528.3 C1138 550 1128.2 580 1128.2 615 V707.7 C1128.2 742 1138 772 1150.7 795.5 C1163.5 772 1173.6 742 1173.6 707.7 V615 C1173.6 580 1163.5 550 1150.7 528.3Z" fill="none" stroke="#951010" stroke-width="1.1"/><clipPath id="rtclip"><path d="M1150.7 528.3 C1138 550 1128.2 580 1128.2 615 V707.7 C1128.2 742 1138 772 1150.7 795.5 C1163.5 772 1173.6 742 1173.6 707.7 V615 C1173.6 580 1163.5 550 1150.7 528.3Z"/></clipPath><g clip-path="url(#rtclip)"><path d="M1120 550.5 H1182 M1120 572.0 H1182 M1120 595.2 H1182 M1120 617.3 H1182 M1120 639.9 H1182 M1120 662.0 H1182 M1120 684.6 H1182 M1120 707.7 H1182 M1120 729.9 H1182 M1120 752.4 H1182 M1120 774.6 H1182 " stroke="#8a0c0c" stroke-width="1"/></g><path d="M1151 798 H1373" stroke="#a83030" stroke-width="1.6"/><path d="M1194.2 793.8 L1202.6000000000001 802.2 M1202.6000000000001 793.8 L1194.2 802.2" stroke="#b00000" stroke-width="2.6"/><path d="M952 747 V775.5 H981" stroke="#777" stroke-width="1.2" fill="none"/></svg>
<div class="a t" style="left:953.5px;top:737.50px;font-size:13px;color:#707070;">z</div>
<div class="a t" style="left:984.8px;top:766.00px;font-size:13px;color:#707070;">y</div>
<svg class="a" style="left:0;top:0;clip-path:inset(215px 5px 349px 916px)" width="1378" height="864"><polygon points="1010.2,296.0 1490.0,351.4 1750.8,1087.1 551.1,620.1" fill="#9a9a9a"/><path d="M1010.2 296.0 L551.1 620.1 M551.1 620.1 L1750.8 1087.1 M1018.9 297.0 L565.8 625.8 M573.9 604.0 L1732.0 1034.2 M1027.6 298.0 L580.9 631.7 M595.5 588.8 L1715.1 986.3 M1036.5 299.0 L596.2 637.7 M615.9 574.3 L1699.7 942.8 M1045.4 300.1 L612.0 643.8 M635.3 560.6 L1685.6 903.2 M1054.5 301.1 L628.0 650.1 M653.8 547.6 L1672.7 866.8 M1063.6 302.1 L644.5 656.5 M671.3 535.2 L1660.9 833.4 M1072.8 303.2 L661.3 663.0 M688.0 523.4 L1649.9 802.6 M1082.1 304.3 L678.5 669.7 M704.0 512.2 L1639.8 774.0 M1091.5 305.4 L696.0 676.5 M719.2 501.4 L1630.4 747.5 M1100.9 306.5 L714.1 683.6 M733.8 491.1 L1621.7 722.9 M1110.5 307.6 L732.5 690.7 M747.7 481.3 L1613.6 699.9 M1120.2 308.7 L751.4 698.1 M761.0 471.9 L1605.9 678.4 M1129.9 309.8 L770.8 705.6 M773.8 462.9 L1598.8 658.2 M1139.8 310.9 L790.6 713.3 M786.1 454.2 L1592.1 639.3 M1149.7 312.1 L810.9 721.3 M797.9 445.9 L1585.8 621.5 M1159.8 313.3 L831.8 729.4 M809.2 437.9 L1579.8 604.7 M1170.0 314.4 L853.2 737.7 M820.1 430.2 L1574.2 588.8 M1180.2 315.6 L875.1 746.2 M830.6 422.8 L1568.9 573.8 M1190.6 316.8 L897.7 755.0 M840.6 415.7 L1563.8 559.6 M1201.1 318.0 L920.8 764.0 M850.4 408.8 L1559.1 546.1 M1211.7 319.3 L944.6 773.3 M859.8 402.2 L1554.5 533.3 M1222.4 320.5 L969.0 782.8 M868.8 395.8 L1550.2 521.2 M1233.2 321.7 L994.1 792.6 M877.5 389.6 L1546.1 509.6 M1244.1 323.0 L1019.9 802.6 M886.0 383.7 L1542.2 498.5 M1255.2 324.3 L1046.5 812.9 M894.2 377.9 L1538.5 488.0 M1266.4 325.6 L1073.8 823.6 M902.1 372.3 L1534.9 477.9 M1277.7 326.9 L1101.9 834.5 M909.7 366.9 L1531.5 468.3 M1289.1 328.2 L1130.9 845.8 M917.1 361.7 L1528.2 459.1 M1300.6 329.5 L1160.8 857.4 M924.3 356.6 L1525.1 450.2 M1312.3 330.9 L1191.6 869.4 M931.2 351.7 L1522.1 441.8 M1324.0 332.2 L1223.4 881.8 M938.0 347.0 L1519.2 433.6 M1336.0 333.6 L1256.1 894.6 M944.5 342.3 L1516.4 425.8 M1348.0 335.0 L1290.0 907.7 M950.9 337.9 L1513.8 418.3 M1360.2 336.4 L1325.0 921.4 M957.1 333.5 L1511.2 411.1 M1372.5 337.8 L1361.1 935.4 M963.1 329.3 L1508.7 404.1 M1385.0 339.3 L1398.5 950.0 M968.9 325.2 L1506.3 397.4 M1397.6 340.7 L1437.2 965.0 M974.5 321.2 L1504.1 390.9 M1410.4 342.2 L1477.2 980.6 M980.1 317.3 L1501.8 384.7 M1423.3 343.7 L1518.7 996.8 M985.4 313.5 L1499.7 378.6 M1436.3 345.2 L1561.7 1013.5 M990.6 309.8 L1497.6 372.8 M1449.5 346.7 L1606.3 1030.9 M995.7 306.2 L1495.6 367.2 M1462.9 348.3 L1652.7 1048.9 M1000.7 302.7 L1493.7 361.8 M1476.4 349.8 L1700.8 1067.6 M1005.5 299.3 L1491.9 356.5 M1490.0 351.4 L1750.8 1087.1 M1010.2 296.0 L1490.0 351.4 " stroke="#8a8a8a" stroke-width=".9"/><path d="M1152.5 448.0 L1222.4 320.5" stroke="#3ca03c" stroke-width="1.4"/><path d="M1152.5 448.0 L1550.2 521.2" stroke="#b03434" stroke-width="1.6"/><defs><linearGradient id="pg" x1="0" y1="0" x2="0" y2="1"><stop offset="0" stop-color="rgba(205,95,95,.8)"/><stop offset=".5" stop-color="rgba(150,55,55,.55)"/><stop offset="1" stop-color="rgba(190,85,85,.7)"/></linearGradient><linearGradient id="pg2" x1="0" y1="0" x2="0" y2="1"><stop offset="0" stop-color="rgba(210,100,100,.8)"/><stop offset=".45" stop-color="rgba(120,50,50,.55)"/><stop offset="1" stop-color="rgba(195,90,90,.75)"/></linearGradient></defs><polygon points="1135.4,242.5 1174.6,246.2 1174.0,264.8 1136.0,263.5" fill="rgba(185,70,70,0.72)" stroke="rgba(185,70,70,0.72)" stroke-width=".6"/><polygon points="1136.0,263.5 1174.0,264.8 1173.0,282.4 1136.5,283.7" fill="rgba(185,70,70,0.68)" stroke="rgba(185,70,70,0.68)" stroke-width=".6"/><polygon points="1136.5,283.7 1173.0,282.4 1172.0,299.0 1137.0,303.7" fill="rgba(185,70,70,0.62)" stroke="rgba(185,70,70,0.62)" stroke-width=".6"/><polygon points="1137.0,303.7 1172.0,299.0 1171.0,317.0 1137.5,322.9" fill="rgba(185,70,70,0.58)" stroke="rgba(185,70,70,0.58)" stroke-width=".6"/><polygon points="1137.5,322.9 1171.0,317.0 1170.6,334.0 1138.0,341.5" fill="rgba(185,70,70,0.55)" stroke="rgba(185,70,70,0.55)" stroke-width=".6"/><polygon points="1138.0,341.5 1170.6,334.0 1170.6,350.8 1138.0,358.8" fill="rgba(185,70,70,0.52)" stroke="rgba(185,70,70,0.52)" stroke-width=".6"/><polygon points="1138.0,358.8 1170.6,350.8 1170.6,367.4 1137.8,374.8" fill="rgba(185,70,70,0.52)" stroke="rgba(185,70,70,0.52)" stroke-width=".6"/><polygon points="1137.8,374.8 1170.6,367.4 1170.6,384.0 1137.5,392.0" fill="rgba(185,70,70,0.52)" stroke="rgba(185,70,70,0.52)" stroke-width=".6"/><polygon points="1137.5,392.0 1170.6,384.0 1170.6,401.4 1137.2,406.8" fill="rgba(185,70,70,0.55)" stroke="rgba(185,70,70,0.55)" stroke-width=".6"/><polygon points="1137.2,406.8 1170.6,401.4 1170.6,417.4 1137.0,421.4" fill="rgba(185,70,70,0.58)" stroke="rgba(185,70,70,0.58)" stroke-width=".6"/><polygon points="1137.0,421.4 1170.6,417.4 1170.6,432.0 1136.8,434.7" fill="rgba(185,70,70,0.62)" stroke="rgba(185,70,70,0.62)" stroke-width=".6"/><polygon points="1136.8,434.7 1170.6,432.0 1170.6,450.7 1136.5,445.4" fill="rgba(185,70,70,0.66)" stroke="rgba(185,70,70,0.66)" stroke-width=".6"/><path d="M1136.0 263.5 L1174.0 264.8 M1136.5 283.7 L1173.0 282.4 M1137.0 303.7 L1172.0 299.0 M1137.5 322.9 L1171.0 317.0 M1138.0 341.5 L1170.6 334.0 M1138.0 358.8 L1170.6 350.8 M1137.8 374.8 L1170.6 367.4 M1137.5 392.0 L1170.6 384.0 M1137.2 406.8 L1170.6 401.4 M1137.0 421.4 L1170.6 417.4 M1136.8 434.7 L1170.6 432.0 " stroke="#a81515" stroke-width="1"/><path d="M1135.4 242.5 L1136.0 263.5 L1136.5 283.7 L1137.0 303.7 L1137.5 322.9 L1138.0 341.5 L1138.0 358.8 L1137.8 374.8 L1137.5 392.0 L1137.2 406.8 L1137.0 421.4 L1136.8 434.7 L1136.5 445.4 M1174.6 246.2 L1174.0 264.8 L1173.0 282.4 L1172.0 299.0 L1171.0 317.0 L1170.6 334.0 L1170.6 350.8 L1170.6 367.4 L1170.6 384.0 L1170.6 401.4 L1170.6 417.4 L1170.6 432.0 L1170.6 450.7" stroke="#a01010" stroke-width="1.1" fill="none"/><path d="M1135.4 242.5 L1174.6 246.2 M1136.5 445.4 L1170.6 450.7" stroke="#a01010" stroke-width="1.1"/><polygon points="1174.6,246.2 1215.3,249.6 1214.5,266.0 1174.0,268.5" fill="rgba(170,70,70,0.72)" stroke="rgba(170,70,70,0.72)" stroke-width=".6"/><polygon points="1174.0,268.5 1214.5,266.0 1210.5,282.9 1176.7,290.9" fill="rgba(170,70,70,0.66)" stroke="rgba(170,70,70,0.66)" stroke-width=".6"/><polygon points="1176.7,290.9 1210.5,282.9 1204.4,300.9 1180.4,311.1" fill="rgba(170,70,70,0.6)" stroke="rgba(170,70,70,0.6)" stroke-width=".6"/><polygon points="1180.4,311.1 1204.4,300.9 1198.0,318.5 1185.0,330.6" fill="rgba(170,70,70,0.5)" stroke="rgba(170,70,70,0.5)" stroke-width=".6"/><polygon points="1185.0,330.6 1198.0,318.5 1194.3,336.0 1187.8,348.0" fill="rgba(170,70,70,0.45)" stroke="rgba(170,70,70,0.45)" stroke-width=".6"/><polygon points="1187.8,348.0 1194.3,336.0 1193.3,353.7 1187.8,361.0" fill="rgba(170,70,70,0.45)" stroke="rgba(170,70,70,0.45)" stroke-width=".6"/><polygon points="1187.8,361.0 1193.3,353.7 1194.3,370.4 1186.9,381.5" fill="rgba(170,70,70,0.45)" stroke="rgba(170,70,70,0.45)" stroke-width=".6"/><polygon points="1186.9,381.5 1194.3,370.4 1196.1,386.0 1182.2,398.0" fill="rgba(170,70,70,0.45)" stroke="rgba(170,70,70,0.45)" stroke-width=".6"/><polygon points="1182.2,398.0 1196.1,386.0 1199.8,401.0 1177.6,415.7" fill="rgba(170,70,70,0.5)" stroke="rgba(170,70,70,0.5)" stroke-width=".6"/><polygon points="1177.6,415.7 1199.8,401.0 1203.0,420.4 1173.0,429.6" fill="rgba(170,70,70,0.56)" stroke="rgba(170,70,70,0.56)" stroke-width=".6"/><polygon points="1173.0,429.6 1203.0,420.4 1205.4,438.0 1171.0,441.7" fill="rgba(170,70,70,0.62)" stroke="rgba(170,70,70,0.62)" stroke-width=".6"/><polygon points="1171.0,441.7 1205.4,438.0 1205.4,455.6 1171.0,451.9" fill="rgba(170,70,70,0.7)" stroke="rgba(170,70,70,0.7)" stroke-width=".6"/><path d="M1174.0 268.5 L1214.5 266.0 M1176.7 290.9 L1210.5 282.9 M1180.4 311.1 L1204.4 300.9 M1185.0 330.6 L1198.0 318.5 M1187.8 348.0 L1194.3 336.0 M1187.8 361.0 L1193.3 353.7 M1186.9 381.5 L1194.3 370.4 M1182.2 398.0 L1196.1 386.0 M1177.6 415.7 L1199.8 401.0 M1173.0 429.6 L1203.0 420.4 M1171.0 441.7 L1205.4 438.0 " stroke="#a81515" stroke-width="1"/><path d="M1174.6 246.2 L1174.0 268.5 L1176.7 290.9 L1180.4 311.1 L1185.0 330.6 L1187.8 348.0 L1187.8 361.0 L1186.9 381.5 L1182.2 398.0 L1177.6 415.7 L1173.0 429.6 L1171.0 441.7 L1171.0 451.9 M1215.3 249.6 L1214.5 266.0 L1210.5 282.9 L1204.4 300.9 L1198.0 318.5 L1194.3 336.0 L1193.3 353.7 L1194.3 370.4 L1196.1 386.0 L1199.8 401.0 L1203.0 420.4 L1205.4 438.0 L1205.4 455.6" stroke="#a01010" stroke-width="1.1" fill="none"/><path d="M1174.6 246.2 L1215.3 249.6 M1171 451.9 L1205.4 455.6" stroke="#a01010" stroke-width="1.1"/><path d="M1188.2 431.79999999999995 L1195.3999999999999 439.0 M1195.3999999999999 431.79999999999995 L1188.2 439.0" stroke="#b00000" stroke-width="2.6"/><path d="M951.8 454.6 V478.9 L980.2 484 M951.8 478.9 L961 466.7" stroke="#777" stroke-width="1.2" fill="none"/></svg>
<div class="a t" style="left:954.5px;top:443.50px;font-size:13px;color:#707070;">z</div>
<div class="a t" style="left:963px;top:457.00px;font-size:13px;color:#707070;">y</div>
<div class="a t" style="left:984px;top:476.00px;font-size:13px;color:#707070;">x</div>
<svg class="a" style="left:611px;top:216px;" width="47" height="18" viewBox="0 0 47 18"><path d="M0 0 H47 V15 L44 18 H0Z" fill="#cdd2da"/><path d="M35.5 2 V17" stroke="#333" stroke-width="1"/><path d="M38 7 H44.5 L41.25 10.5Z" fill="#333"/></svg>
<div class="a t" style="left:620px;top:218.84px;font-size:12px;color:#4a4a52;transform:scaleX(1.0338);transform-origin:0 0;">Top</div>
<svg class="a" style="left:916px;top:216px;" width="87" height="18" viewBox="0 0 87 18"><path d="M0 0 H87 V15 L84 18 H0Z" fill="#cdd2da"/><path d="M75.5 2 V17" stroke="#333" stroke-width="1"/><path d="M78 7 H84.5 L81.25 10.5Z" fill="#333"/></svg>
<div class="a t" style="left:925px;top:218.84px;font-size:12px;color:#4a4a52;transform:scaleX(0.9411);transform-origin:0 0;">Perspective</div>
<svg class="a" style="left:611px;top:519px;" width="54" height="18" viewBox="0 0 54 18"><path d="M0 0 H54 V15 L51 18 H0Z" fill="#cdd2da"/><path d="M42.5 2 V17" stroke="#333" stroke-width="1"/><path d="M45 7 H51.5 L48.25 10.5Z" fill="#333"/></svg>
<div class="a t" style="left:620px;top:521.84px;font-size:12px;color:#4a4a52;transform:scaleX(0.9998);transform-origin:0 0;">Front</div>
<svg class="a" style="left:916px;top:519px;" width="54" height="18" viewBox="0 0 54 18"><path d="M0 0 H54 V15 L51 18 H0Z" fill="#8fa9c8"/><path d="M42.5 2 V17" stroke="#333" stroke-width="1"/><path d="M45 7 H51.5 L48.25 10.5Z" fill="#333"/></svg>
<div class="a t" style="left:925px;top:521.84px;font-size:12px;color:#202028;transform:scaleX(0.9996);transform-origin:0 0;">Right</div>
<div class="a" style="left:609px;top:812px;width:769px;height:22px;background:#e2e6ed"></div>
<svg class="a" style="left:805px;top:813px;" width="52.799999999999955" height="21" viewBox="0 0 52.799999999999955 21"><path d="M0.5 0.5 V7 L12 20.5 H39.799999999999955 Q42.799999999999955 20.5 42.799999999999955 17 V0.5" fill="#d3d9e5" stroke="#a9b1bf" stroke-width="1"/></svg>
<svg class="a" style="left:714px;top:813px;" width="67.39999999999998" height="21" viewBox="0 0 67.39999999999998 21"><path d="M0.5 0.5 V7 L12 20.5 H54.39999999999998 Q57.39999999999998 20.5 57.39999999999998 17 V0.5" fill="#d3d9e5" stroke="#a9b1bf" stroke-width="1"/></svg>
<svg class="a" style="left:676px;top:813px;" width="59" height="21" viewBox="0 0 59 21"><path d="M0.5 0.5 V7 L12 20.5 H46 Q49 20.5 49 17 V0.5" fill="#d3d9e5" stroke="#a9b1bf" stroke-width="1"/></svg>
<svg class="a" style="left:610px;top:813px;" width="87.5" height="21" viewBox="0 0 87.5 21"><path d="M0.5 0.5 V7 L12 20.5 H74.5 Q77.5 20.5 77.5 17 V0.5" fill="#d3d9e5" stroke="#a9b1bf" stroke-width="1"/></svg>
<svg class="a" style="left:764px;top:813px;" width="63" height="21" viewBox="0 0 63 21"><path d="M0.5 0.5 V7 L12 20.5 H50 Q53 20.5 53 17 V0.5" fill="#fbfcfd" stroke="#a9b1bf" stroke-width="1"/></svg>
<div class="a t" style="left:621.3px;top:817.84px;font-size:12px;color:#000;transform:scaleX(0.9523);transform-origin:0 0;">Perspective</div>
<div class="a t" style="left:699.6px;top:817.84px;font-size:12px;color:#000;transform:scaleX(0.9821);transform-origin:0 0;">Top</div>
<div class="a t" style="left:737.5px;top:817.84px;font-size:12px;color:#000;transform:scaleX(0.9820);transform-origin:0 0;">Front</div>
<div class="a t" style="left:783.8px;top:817.84px;font-size:12px;color:#000;transform:scaleX(0.9567);transform-origin:0 0;">Right</div>
<svg class="a" style="left:829px;top:818px;" width="13" height="13" viewBox="0 0 13 13"><path d="M5 1 H8 V5 H12 V8 H8 V12 H5 V8 H1 V5 H5Z" fill="none" stroke="#666" stroke-width="1"/></svg>
<div class="a" style="left:609px;top:813px;width:769px;height:1px;background:#b8c0cc"></div>
<div class="a" style="left:609px;top:834px;width:769px;height:21px;background:#e3e6ee;border-top:1px solid #9ea5b0;border-bottom:1px solid #9ea5b0"></div>
<div class="a" style="left:657.5px;top:835px;width:1px;height:19px;background:#a8aeb8"></div>
<div class="a" style="left:733.6px;top:835px;width:1px;height:19px;background:#a8aeb8"></div>
<div class="a" style="left:809.3px;top:835px;width:1px;height:19px;background:#a8aeb8"></div>
<div class="a" style="left:885.5px;top:835px;width:1px;height:19px;background:#a8aeb8"></div>
<div class="a" style="left:961.3px;top:835px;width:1px;height:19px;background:#a8aeb8"></div>
<div class="a" style="left:1110.5px;top:835px;width:1px;height:19px;background:#a8aeb8"></div>
<div class="a" style="left:1178.8px;top:835px;width:1px;height:19px;background:#a8aeb8"></div>
<div class="a" style="left:1222.7px;top:835px;width:1px;height:19px;background:#a8aeb8"></div>
<div class="a" style="left:1267.6px;top:835px;width:1px;height:19px;background:#a8aeb8"></div>
<div class="a" style="left:1314.7px;top:835px;width:1px;height:19px;background:#a8aeb8"></div>
<div class="a" style="left:1179.5px;top:835px;width:43px;height:19px;background:#e8f2fb"></div>
<div class="a" style="left:1223.5px;top:835px;width:44px;height:19px;background:#e8f2fb"></div>
<div class="a" style="left:1268.5px;top:835px;width:46px;height:19px;background:#e8f2fb"></div>
<div class="a t" style="left:612.5px;top:838.59px;font-size:12.3px;color:#000;transform:scaleX(0.9792);transform-origin:0 0;">CPlane</div>
<div class="a t" style="left:674px;top:838.59px;font-size:12.3px;color:#000;transform:scaleX(0.9451);transform-origin:0 0;">x -17.81</div>
<div class="a t" style="left:753.8px;top:838.59px;font-size:12.3px;color:#000;transform:scaleX(0.9362);transform-origin:0 0;">y -7.79</div>
<div class="a t" style="left:831.5px;top:838.59px;font-size:12.3px;color:#000;transform:scaleX(0.9850);transform-origin:0 0;">z 0.00</div>
<div class="a t" style="left:894.3px;top:838.59px;font-size:12.3px;color:#000;transform:scaleX(0.9955);transform-origin:0 0;">Millimeters</div>
<div class="a t" style="left:981px;top:838.59px;font-size:12.3px;color:#000;transform:scaleX(1.0008);transform-origin:0 0;">Default</div>
<div class="a t" style="left:1117.2px;top:838.59px;font-size:12.3px;color:#000;transform:scaleX(0.9806);transform-origin:0 0;">Grid Snap</div>
<div class="a t" style="left:1185px;top:838.59px;font-size:12.3px;color:#000;font-weight:bold;transform:scaleX(0.9380);transform-origin:0 0;">Ortho</div>
<div class="a t" style="left:1227.3px;top:838.59px;font-size:12.3px;color:#000;font-weight:bold;transform:scaleX(0.9627);transform-origin:0 0;">Planar</div>
<div class="a t" style="left:1273.3px;top:838.59px;font-size:12.3px;color:#000;font-weight:bold;transform:scaleX(0.9432);transform-origin:0 0;">Osnap</div>
<div class="a t" style="left:1321px;top:838.59px;font-size:12.3px;color:#000;transform:scaleX(1.0143);transform-origin:0 0;">SmartTrack</div>
<div class="a" style="left:965px;top:839px;width:14px;height:14px;background:#000"></div>
<div class="a" style="left:609px;top:855px;width:769px;height:6px;background:linear-gradient(#fafbfc,#eef0f3)"></div>
<div class="a" style="left:602px;top:861px;width:776px;height:1px;background:#3a3a3a"></div>
<div class="a" style="left:606px;top:862px;width:772px;height:2px;background:#b9bbbe"></div>
<div class="a" style="left:660px;top:861px;width:30px;height:3px;background:rgba(60,60,70,.45);filter:blur(1px)"></div>
<div class="a" style="left:700px;top:861px;width:55px;height:3px;background:rgba(60,60,70,.45);filter:blur(1px)"></div>
<div class="a" style="left:790px;top:861px;width:40px;height:3px;background:rgba(60,60,70,.45);filter:blur(1px)"></div>
<div class="a" style="left:930px;top:861px;width:60px;height:3px;background:rgba(60,60,70,.45);filter:blur(1px)"></div>
</body></html>
